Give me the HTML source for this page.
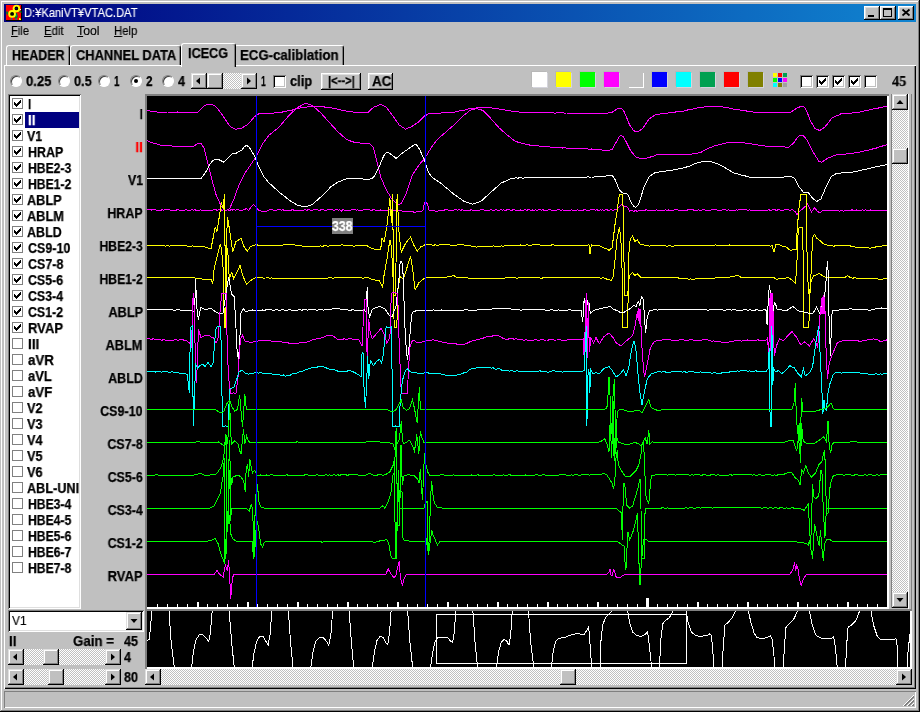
<!DOCTYPE html>
<html><head><meta charset="utf-8"><title>KaniVT</title>
<style>
html,body{margin:0;padding:0;}
body{width:920px;height:712px;overflow:hidden;background:#c0c0c0;position:relative;font-family:"Liberation Sans",sans-serif;font-size:13px;color:#000;}
.a{position:absolute;}
.b{font-weight:bold;}
.t{position:absolute;white-space:nowrap;line-height:16px;height:16px;will-change:transform;}
.raised{background:#c0c0c0;box-shadow:inset -1px -1px 0 #000,inset 1px 1px 0 #fff,inset -2px -2px 0 #808080,inset 2px 2px 0 #dfdfdf;}
.raised2{background:#c0c0c0;box-shadow:inset -1px -1px 0 #000,inset 1px 1px 0 #dfdfdf,inset -2px -2px 0 #808080,inset 2px 2px 0 #fff;}
.sunken{box-shadow:inset 1px 1px 0 #808080,inset -1px -1px 0 #fff,inset 2px 2px 0 #000,inset -2px -2px 0 #dfdfdf;}
.sunk1{box-shadow:inset 1px 1px 0 #808080,inset -1px -1px 0 #fff;}
.dither{background-color:#c0c0c0;background-image:
 linear-gradient(45deg,#fff 25%,transparent 25%,transparent 75%,#fff 75%),
 linear-gradient(45deg,#fff 25%,transparent 25%,transparent 75%,#fff 75%);
 background-size:2px 2px;background-position:0 0,1px 1px;}
.cb{position:absolute;width:11px;height:11px;background:#fff;box-shadow:inset 0 0 0 1px #808080;}
.cb3{position:absolute;width:13px;height:13px;background:#fff;box-shadow:inset 1px 1px 0 #808080,inset -1px -1px 0 #fff,inset 2px 2px 0 #000,inset -2px -2px 0 #c0c0c0;}
.sw{position:absolute;width:15px;height:15px;top:72px;box-shadow:1px 1px 0 #d4d4dc,-1px -1px 0 #b8b8b8;}
svg{position:absolute;overflow:visible;}
</style></head>
<body>
<div class="a " style="left:0px;top:0px;width:920px;height:712px;background:#c0c0c0;box-shadow:inset -1px -1px 0 #000,inset 1px 1px 0 #c0c0c0,inset -2px -2px 0 #808080,inset 2px 2px 0 #fff;"></div>
<div class="a " style="left:4px;top:4px;width:912px;height:18px;background:linear-gradient(90deg,#000080 0%,#1084d0 100%);"></div>
<svg class="a" style="left:6px;top:5px" width="16" height="16" viewBox="0 0 16 16">
<rect width="16" height="16" fill="#000"/>
<rect width="15" height="15" fill="#f00"/>
<path d="M0 6.5h2v3h-1.500z M12.500 7l2-1.500 1.500 2h-3.500z M9.500 8h1.500l1 4-1.500 1.500h-2z" fill="#008020"/>
<path d="M5 13h1v2h-1z M9.500 13.500h1.500v1.500h-1.500z M10 9.500h1v2h-1z" fill="#008080"/>
<circle cx="10.400" cy="3.400" r="2.800" fill="#000" stroke="#ff0" stroke-width="1.900"/>
<circle cx="6.100" cy="8.900" r="2.900" fill="#000" stroke="#ff0" stroke-width="1.900"/>
<rect x="9.500" y="3" width="1" height="1" fill="#0000a0"/>
<path d="M13 13h1l1 1v1h-2z" fill="#ff0"/>
<rect x="14" y="4" width="1" height="1" fill="#fff"/>
</svg>
<div class="t" style="left:24.0px;transform-origin:0 0;top:5px;font-size:12px;-webkit-text-stroke:0.15px;color:#fff;transform:scaleX(0.928);">D:¥KaniVT¥VTAC.DAT</div>
<div class="a raised" style="left:864px;top:6px;width:16px;height:14px;"></div>
<div class="a raised" style="left:880px;top:6px;width:16px;height:14px;"></div>
<div class="a raised" style="left:898px;top:6px;width:16px;height:14px;"></div>
<div class="a " style="left:868px;top:15px;width:6px;height:2px;background:#000"></div>
<div class="a " style="left:883px;top:8px;width:9px;height:9px;border:1px solid #000;border-top:2px solid #000;box-sizing:border-box;"></div>
<svg class="a" style="left:898px;top:6px" width="16" height="14"><path d="M4.5 3.5l7 6M11.500 3.5l-7 6" stroke="#000" stroke-width="1.7" fill="none"/></svg>
<div class="t" style="left:10.8px;transform-origin:0 0;top:23px;font-size:12px;-webkit-text-stroke:0.15px;transform:scaleX(0.931);"><u>F</u>ile</div>
<div class="t" style="left:43.5px;transform-origin:0 0;top:23px;font-size:12px;-webkit-text-stroke:0.15px;transform:scaleX(0.952);"><u>E</u>dit</div>
<div class="t" style="left:77.2px;transform-origin:0 0;top:23px;font-size:12px;-webkit-text-stroke:0.15px;transform:scaleX(1.022);"><u>T</u>ool</div>
<div class="t" style="left:113.5px;transform-origin:0 0;top:23px;font-size:12px;-webkit-text-stroke:0.15px;transform:scaleX(0.944);"><u>H</u>elp</div>
<div class="a " style="left:4px;top:65px;width:912px;height:624px;box-shadow:inset 1px 1px 0 #fff,inset -1px -1px 0 #000,inset -2px -2px 0 #808080;"></div>
<div class="a" style="left:6px;top:45px;width:64px;height:20px;box-sizing:border-box;border-top:1px solid #fff;border-left:1px solid #fff;border-right:1px solid #000;border-radius:3px 3px 0 0;background:#c0c0c0;box-shadow:inset -1px 0 0 #808080;"></div><div class="t" style="left:11.8px;transform-origin:0 0;top:47px;font-size:14px;font-weight:bold;-webkit-text-stroke:0.25px;transform:scaleX(0.888);">HEADER</div>
<div class="a" style="left:70px;top:45px;width:111px;height:20px;box-sizing:border-box;border-top:1px solid #fff;border-left:1px solid #fff;border-right:1px solid #000;border-radius:3px 3px 0 0;background:#c0c0c0;box-shadow:inset -1px 0 0 #808080;"></div><div class="t" style="left:76.0px;transform-origin:0 0;top:47px;font-size:14px;font-weight:bold;-webkit-text-stroke:0.25px;transform:scaleX(0.921);">CHANNEL DATA</div>
<div class="a" style="left:234px;top:45px;width:110px;height:20px;box-sizing:border-box;border-top:1px solid #fff;border-left:1px solid #fff;border-right:1px solid #000;border-radius:3px 3px 0 0;background:#c0c0c0;box-shadow:inset -1px 0 0 #808080;"></div><div class="t" style="left:239.5px;transform-origin:0 0;top:47px;font-size:14px;font-weight:bold;-webkit-text-stroke:0.25px;transform:scaleX(0.945);">ECG-caliblation</div>
<div class="a" style="left:181px;top:43px;width:55px;height:24px;box-sizing:border-box;border-top:1px solid #fff;border-left:1px solid #fff;border-right:1px solid #000;border-radius:3px 3px 0 0;background:#c0c0c0;box-shadow:inset -1px 0 0 #808080;"></div><div class="t" style="left:188.0px;transform-origin:0 0;top:45px;font-size:14px;font-weight:bold;-webkit-text-stroke:0.25px;transform:scaleX(0.902);">ICECG</div>
<div class="a" style="left:10px;top:75px;width:12px;height:12px;border-radius:50%;background:#fff;box-sizing:border-box;border:1px solid;border-color:#808080 #fff #fff #808080;box-shadow:inset 1px 1px 0 #404040;"></div>
<div class="t" style="left:25.5px;transform-origin:0 0;top:73px;font-size:14px;font-weight:bold;-webkit-text-stroke:0.25px;transform:scaleX(0.932);">0.25</div>
<div class="a" style="left:58px;top:75px;width:12px;height:12px;border-radius:50%;background:#fff;box-sizing:border-box;border:1px solid;border-color:#808080 #fff #fff #808080;box-shadow:inset 1px 1px 0 #404040;"></div>
<div class="t" style="left:73.5px;transform-origin:0 0;top:73px;font-size:14px;font-weight:bold;-webkit-text-stroke:0.25px;transform:scaleX(0.909);">0.5</div>
<div class="a" style="left:98px;top:75px;width:12px;height:12px;border-radius:50%;background:#fff;box-sizing:border-box;border:1px solid;border-color:#808080 #fff #fff #808080;box-shadow:inset 1px 1px 0 #404040;"></div>
<div class="t" style="left:114.1px;transform-origin:0 0;top:73px;font-size:14px;font-weight:bold;-webkit-text-stroke:0.25px;transform:scaleX(0.693);">1</div>
<div class="a" style="left:130px;top:75px;width:12px;height:12px;border-radius:50%;background:#fff;box-sizing:border-box;border:1px solid;border-color:#808080 #fff #fff #808080;box-shadow:inset 1px 1px 0 #404040;"></div>
<div class="t" style="left:145.5px;transform-origin:0 0;top:73px;font-size:14px;font-weight:bold;-webkit-text-stroke:0.25px;transform:scaleX(0.834);">2</div>
<div class="a" style="left:162px;top:75px;width:12px;height:12px;border-radius:50%;background:#fff;box-sizing:border-box;border:1px solid;border-color:#808080 #fff #fff #808080;box-shadow:inset 1px 1px 0 #404040;"></div>
<div class="t" style="left:177.8px;transform-origin:0 0;top:73px;font-size:14px;font-weight:bold;-webkit-text-stroke:0.25px;transform:scaleX(0.898);">4</div>
<div class="a " style="left:134px;top:79px;width:4px;height:4px;background:#000;border-radius:50%"></div>
<div class="a dither" style="left:191px;top:73px;width:66px;height:16px;"></div>
<div class="a raised2" style="left:191px;top:73px;width:16px;height:16px;"></div>
<svg class="a" style="left:0;top:0" width="1" height="1"><polygon points="200,77.5 200,84.5 196,81" fill="#000"/></svg>
<div class="a raised2" style="left:207px;top:73px;width:16px;height:16px;"></div>
<div class="a raised2" style="left:241px;top:73px;width:16px;height:16px;"></div>
<svg class="a" style="left:0;top:0" width="1" height="1"><polygon points="247,77.5 247,84.5 251,81" fill="#000"/></svg>
<div class="t" style="left:260.8px;transform-origin:0 0;top:73px;font-size:14px;font-weight:bold;-webkit-text-stroke:0.25px;transform:scaleX(0.603);">1</div>
<div class="a cb3" style="left:273px;top:75px;width:13px;height:13px;"></div>
<div class="t" style="left:290.3px;transform-origin:0 0;top:73px;font-size:14px;font-weight:bold;-webkit-text-stroke:0.25px;transform:scaleX(0.920);">clip</div>
<div class="a raised" style="left:321px;top:73px;width:40px;height:17px;"></div>
<div class="t" style="left:327.8px;transform-origin:0 0;top:73px;font-size:12px;font-weight:bold;-webkit-text-stroke:0.25px;transform:scaleX(0.940);">|&lt;--&gt;|</div>
<div class="a raised" style="left:368px;top:73px;width:25px;height:17px;"></div>
<div class="t" style="left:371.5px;transform-origin:0 0;top:73px;font-size:14px;font-weight:bold;-webkit-text-stroke:0.25px;transform:scaleX(0.964);">AC</div>
<div class="sw" style="left:532px;background:#fff"></div>
<div class="sw" style="left:556px;background:#ff0"></div>
<div class="sw" style="left:580px;background:#0f0"></div>
<div class="sw" style="left:604px;background:#f0f"></div>
<div class="sw" style="left:628px;background:#c0c0c0;box-shadow:1px 1px 0 #fff"></div>
<div class="sw" style="left:652px;background:#00f"></div>
<div class="sw" style="left:676px;background:#0ff"></div>
<div class="sw" style="left:700px;background:#00a050"></div>
<div class="sw" style="left:724px;background:#f00"></div>
<div class="sw" style="left:748px;background:#808000"></div>
<div class="a " style="left:773px;top:73px;width:4px;height:4px;background:#ff0"></div>
<div class="a " style="left:778px;top:73px;width:4px;height:4px;background:#f00"></div>
<div class="a " style="left:783px;top:73px;width:4px;height:4px;background:#00a050"></div>
<div class="a " style="left:773px;top:78px;width:4px;height:4px;background:#0f0"></div>
<div class="a " style="left:778px;top:78px;width:4px;height:4px;background:#00f"></div>
<div class="a " style="left:783px;top:78px;width:4px;height:4px;background:#f0f"></div>
<div class="a " style="left:773px;top:83px;width:4px;height:4px;background:#0ff"></div>
<div class="a " style="left:778px;top:83px;width:4px;height:4px;background:#808000"></div>
<div class="a " style="left:783px;top:83px;width:4px;height:4px;background:#a0a0a0"></div>
<div class="a cb3" style="left:800px;top:75px;width:13px;height:13px;"></div>
<div class="a cb3" style="left:816px;top:75px;width:13px;height:13px;"></div>
<svg class="a" style="left:817px;top:76px" width="11" height="11" shape-rendering="crispEdges" fill="#000"><rect x="2" y="4" width="1" height="3"/><rect x="3" y="5" width="1" height="3"/><rect x="4" y="6" width="1" height="3"/><rect x="5" y="5" width="1" height="3"/><rect x="6" y="4" width="1" height="3"/><rect x="7" y="3" width="1" height="3"/><rect x="8" y="2" width="1" height="3"/></svg>
<div class="a cb3" style="left:832px;top:75px;width:13px;height:13px;"></div>
<svg class="a" style="left:833px;top:76px" width="11" height="11" shape-rendering="crispEdges" fill="#000"><rect x="2" y="4" width="1" height="3"/><rect x="3" y="5" width="1" height="3"/><rect x="4" y="6" width="1" height="3"/><rect x="5" y="5" width="1" height="3"/><rect x="6" y="4" width="1" height="3"/><rect x="7" y="3" width="1" height="3"/><rect x="8" y="2" width="1" height="3"/></svg>
<div class="a cb3" style="left:848px;top:75px;width:13px;height:13px;"></div>
<svg class="a" style="left:849px;top:76px" width="11" height="11" shape-rendering="crispEdges" fill="#000"><rect x="2" y="4" width="1" height="3"/><rect x="3" y="5" width="1" height="3"/><rect x="4" y="6" width="1" height="3"/><rect x="5" y="5" width="1" height="3"/><rect x="6" y="4" width="1" height="3"/><rect x="7" y="3" width="1" height="3"/><rect x="8" y="2" width="1" height="3"/></svg>
<div class="a cb3" style="left:864px;top:75px;width:13px;height:13px;"></div>
<div class="t" style="left:891.5px;transform-origin:0 0;top:73px;font-size:15px;font-weight:bold;-webkit-text-stroke:0.25px;font-family:'Liberation Serif',serif;transform:scaleX(0.953);">45</div>
<div class="a sunken" style="left:8px;top:94px;width:73px;height:515px;background:#fff"></div>
<div class="a cb" style="left:12px;top:98px;width:11px;height:11px;"></div>
<svg class="a" style="left:12px;top:98px" width="11" height="11" shape-rendering="crispEdges" fill="#000"><rect x="2" y="4" width="1" height="3"/><rect x="3" y="5" width="1" height="3"/><rect x="4" y="6" width="1" height="3"/><rect x="5" y="5" width="1" height="3"/><rect x="6" y="4" width="1" height="3"/><rect x="7" y="3" width="1" height="3"/><rect x="8" y="2" width="1" height="3"/></svg>
<div class="t" style="left:27.5px;transform-origin:0 0;top:96px;font-size:14px;font-weight:bold;-webkit-text-stroke:0.25px;transform:scaleX(0.822);">I</div>
<div class="a " style="left:25px;top:112px;width:54px;height:16px;background:#000080"></div>
<div class="a cb" style="left:12px;top:114px;width:11px;height:11px;"></div>
<svg class="a" style="left:12px;top:114px" width="11" height="11" shape-rendering="crispEdges" fill="#000"><rect x="2" y="4" width="1" height="3"/><rect x="3" y="5" width="1" height="3"/><rect x="4" y="6" width="1" height="3"/><rect x="5" y="5" width="1" height="3"/><rect x="6" y="4" width="1" height="3"/><rect x="7" y="3" width="1" height="3"/><rect x="8" y="2" width="1" height="3"/></svg>
<div class="t" style="left:27.5px;transform-origin:0 0;top:112px;font-size:14px;font-weight:bold;-webkit-text-stroke:0.25px;color:#fff;transform:scaleX(0.951);">II</div>
<div class="a cb" style="left:12px;top:130px;width:11px;height:11px;"></div>
<svg class="a" style="left:12px;top:130px" width="11" height="11" shape-rendering="crispEdges" fill="#000"><rect x="2" y="4" width="1" height="3"/><rect x="3" y="5" width="1" height="3"/><rect x="4" y="6" width="1" height="3"/><rect x="5" y="5" width="1" height="3"/><rect x="6" y="4" width="1" height="3"/><rect x="7" y="3" width="1" height="3"/><rect x="8" y="2" width="1" height="3"/></svg>
<div class="t" style="left:26.9px;transform-origin:0 0;top:128px;font-size:14px;font-weight:bold;-webkit-text-stroke:0.25px;transform:scaleX(0.888);">V1</div>
<div class="a cb" style="left:12px;top:146px;width:11px;height:11px;"></div>
<svg class="a" style="left:12px;top:146px" width="11" height="11" shape-rendering="crispEdges" fill="#000"><rect x="2" y="4" width="1" height="3"/><rect x="3" y="5" width="1" height="3"/><rect x="4" y="6" width="1" height="3"/><rect x="5" y="5" width="1" height="3"/><rect x="6" y="4" width="1" height="3"/><rect x="7" y="3" width="1" height="3"/><rect x="8" y="2" width="1" height="3"/></svg>
<div class="t" style="left:27.5px;transform-origin:0 0;top:144px;font-size:14px;font-weight:bold;-webkit-text-stroke:0.25px;transform:scaleX(0.890);">HRAP</div>
<div class="a cb" style="left:12px;top:162px;width:11px;height:11px;"></div>
<svg class="a" style="left:12px;top:162px" width="11" height="11" shape-rendering="crispEdges" fill="#000"><rect x="2" y="4" width="1" height="3"/><rect x="3" y="5" width="1" height="3"/><rect x="4" y="6" width="1" height="3"/><rect x="5" y="5" width="1" height="3"/><rect x="6" y="4" width="1" height="3"/><rect x="7" y="3" width="1" height="3"/><rect x="8" y="2" width="1" height="3"/></svg>
<div class="t" style="left:27.5px;transform-origin:0 0;top:160px;font-size:14px;font-weight:bold;-webkit-text-stroke:0.25px;transform:scaleX(0.870);">HBE2-3</div>
<div class="a cb" style="left:12px;top:178px;width:11px;height:11px;"></div>
<svg class="a" style="left:12px;top:178px" width="11" height="11" shape-rendering="crispEdges" fill="#000"><rect x="2" y="4" width="1" height="3"/><rect x="3" y="5" width="1" height="3"/><rect x="4" y="6" width="1" height="3"/><rect x="5" y="5" width="1" height="3"/><rect x="6" y="4" width="1" height="3"/><rect x="7" y="3" width="1" height="3"/><rect x="8" y="2" width="1" height="3"/></svg>
<div class="t" style="left:27.5px;transform-origin:0 0;top:176px;font-size:14px;font-weight:bold;-webkit-text-stroke:0.25px;transform:scaleX(0.870);">HBE1-2</div>
<div class="a cb" style="left:12px;top:194px;width:11px;height:11px;"></div>
<svg class="a" style="left:12px;top:194px" width="11" height="11" shape-rendering="crispEdges" fill="#000"><rect x="2" y="4" width="1" height="3"/><rect x="3" y="5" width="1" height="3"/><rect x="4" y="6" width="1" height="3"/><rect x="5" y="5" width="1" height="3"/><rect x="6" y="4" width="1" height="3"/><rect x="7" y="3" width="1" height="3"/><rect x="8" y="2" width="1" height="3"/></svg>
<div class="t" style="left:26.9px;transform-origin:0 0;top:192px;font-size:14px;font-weight:bold;-webkit-text-stroke:0.25px;transform:scaleX(0.910);">ABLP</div>
<div class="a cb" style="left:12px;top:210px;width:11px;height:11px;"></div>
<svg class="a" style="left:12px;top:210px" width="11" height="11" shape-rendering="crispEdges" fill="#000"><rect x="2" y="4" width="1" height="3"/><rect x="3" y="5" width="1" height="3"/><rect x="4" y="6" width="1" height="3"/><rect x="5" y="5" width="1" height="3"/><rect x="6" y="4" width="1" height="3"/><rect x="7" y="3" width="1" height="3"/><rect x="8" y="2" width="1" height="3"/></svg>
<div class="t" style="left:26.9px;transform-origin:0 0;top:208px;font-size:14px;font-weight:bold;-webkit-text-stroke:0.25px;transform:scaleX(0.913);">ABLM</div>
<div class="a cb" style="left:12px;top:226px;width:11px;height:11px;"></div>
<svg class="a" style="left:12px;top:226px" width="11" height="11" shape-rendering="crispEdges" fill="#000"><rect x="2" y="4" width="1" height="3"/><rect x="3" y="5" width="1" height="3"/><rect x="4" y="6" width="1" height="3"/><rect x="5" y="5" width="1" height="3"/><rect x="6" y="4" width="1" height="3"/><rect x="7" y="3" width="1" height="3"/><rect x="8" y="2" width="1" height="3"/></svg>
<div class="t" style="left:26.9px;transform-origin:0 0;top:224px;font-size:14px;font-weight:bold;-webkit-text-stroke:0.25px;transform:scaleX(0.892);">ABLD</div>
<div class="a cb" style="left:12px;top:242px;width:11px;height:11px;"></div>
<svg class="a" style="left:12px;top:242px" width="11" height="11" shape-rendering="crispEdges" fill="#000"><rect x="2" y="4" width="1" height="3"/><rect x="3" y="5" width="1" height="3"/><rect x="4" y="6" width="1" height="3"/><rect x="5" y="5" width="1" height="3"/><rect x="6" y="4" width="1" height="3"/><rect x="7" y="3" width="1" height="3"/><rect x="8" y="2" width="1" height="3"/></svg>
<div class="t" style="left:27.5px;transform-origin:0 0;top:240px;font-size:14px;font-weight:bold;-webkit-text-stroke:0.25px;transform:scaleX(0.891);">CS9-10</div>
<div class="a cb" style="left:12px;top:258px;width:11px;height:11px;"></div>
<svg class="a" style="left:12px;top:258px" width="11" height="11" shape-rendering="crispEdges" fill="#000"><rect x="2" y="4" width="1" height="3"/><rect x="3" y="5" width="1" height="3"/><rect x="4" y="6" width="1" height="3"/><rect x="5" y="5" width="1" height="3"/><rect x="6" y="4" width="1" height="3"/><rect x="7" y="3" width="1" height="3"/><rect x="8" y="2" width="1" height="3"/></svg>
<div class="t" style="left:27.5px;transform-origin:0 0;top:256px;font-size:14px;font-weight:bold;-webkit-text-stroke:0.25px;transform:scaleX(0.889);">CS7-8</div>
<div class="a cb" style="left:12px;top:274px;width:11px;height:11px;"></div>
<svg class="a" style="left:12px;top:274px" width="11" height="11" shape-rendering="crispEdges" fill="#000"><rect x="2" y="4" width="1" height="3"/><rect x="3" y="5" width="1" height="3"/><rect x="4" y="6" width="1" height="3"/><rect x="5" y="5" width="1" height="3"/><rect x="6" y="4" width="1" height="3"/><rect x="7" y="3" width="1" height="3"/><rect x="8" y="2" width="1" height="3"/></svg>
<div class="t" style="left:27.5px;transform-origin:0 0;top:272px;font-size:14px;font-weight:bold;-webkit-text-stroke:0.25px;transform:scaleX(0.882);">CS5-6</div>
<div class="a cb" style="left:12px;top:290px;width:11px;height:11px;"></div>
<svg class="a" style="left:12px;top:290px" width="11" height="11" shape-rendering="crispEdges" fill="#000"><rect x="2" y="4" width="1" height="3"/><rect x="3" y="5" width="1" height="3"/><rect x="4" y="6" width="1" height="3"/><rect x="5" y="5" width="1" height="3"/><rect x="6" y="4" width="1" height="3"/><rect x="7" y="3" width="1" height="3"/><rect x="8" y="2" width="1" height="3"/></svg>
<div class="t" style="left:27.5px;transform-origin:0 0;top:288px;font-size:14px;font-weight:bold;-webkit-text-stroke:0.25px;transform:scaleX(0.882);">CS3-4</div>
<div class="a cb" style="left:12px;top:306px;width:11px;height:11px;"></div>
<svg class="a" style="left:12px;top:306px" width="11" height="11" shape-rendering="crispEdges" fill="#000"><rect x="2" y="4" width="1" height="3"/><rect x="3" y="5" width="1" height="3"/><rect x="4" y="6" width="1" height="3"/><rect x="5" y="5" width="1" height="3"/><rect x="6" y="4" width="1" height="3"/><rect x="7" y="3" width="1" height="3"/><rect x="8" y="2" width="1" height="3"/></svg>
<div class="t" style="left:27.5px;transform-origin:0 0;top:304px;font-size:14px;font-weight:bold;-webkit-text-stroke:0.25px;transform:scaleX(0.882);">CS1-2</div>
<div class="a cb" style="left:12px;top:322px;width:11px;height:11px;"></div>
<svg class="a" style="left:12px;top:322px" width="11" height="11" shape-rendering="crispEdges" fill="#000"><rect x="2" y="4" width="1" height="3"/><rect x="3" y="5" width="1" height="3"/><rect x="4" y="6" width="1" height="3"/><rect x="5" y="5" width="1" height="3"/><rect x="6" y="4" width="1" height="3"/><rect x="7" y="3" width="1" height="3"/><rect x="8" y="2" width="1" height="3"/></svg>
<div class="t" style="left:27.5px;transform-origin:0 0;top:320px;font-size:14px;font-weight:bold;-webkit-text-stroke:0.25px;transform:scaleX(0.931);">RVAP</div>
<div class="a cb" style="left:12px;top:338px;width:11px;height:11px;"></div>
<div class="t" style="left:27.5px;transform-origin:0 0;top:336px;font-size:14px;font-weight:bold;-webkit-text-stroke:0.25px;transform:scaleX(0.968);">III</div>
<div class="a cb" style="left:12px;top:354px;width:11px;height:11px;"></div>
<div class="t" style="left:27.5px;transform-origin:0 0;top:352px;font-size:14px;font-weight:bold;-webkit-text-stroke:0.25px;transform:scaleX(0.955);">aVR</div>
<div class="a cb" style="left:12px;top:370px;width:11px;height:11px;"></div>
<div class="t" style="left:27.5px;transform-origin:0 0;top:368px;font-size:14px;font-weight:bold;-webkit-text-stroke:0.25px;transform:scaleX(0.930);">aVL</div>
<div class="a cb" style="left:12px;top:386px;width:11px;height:11px;"></div>
<div class="t" style="left:27.5px;transform-origin:0 0;top:384px;font-size:14px;font-weight:bold;-webkit-text-stroke:0.25px;transform:scaleX(0.950);">aVF</div>
<div class="a cb" style="left:12px;top:402px;width:11px;height:11px;"></div>
<div class="t" style="left:26.9px;transform-origin:0 0;top:400px;font-size:14px;font-weight:bold;-webkit-text-stroke:0.25px;transform:scaleX(0.911);">V2</div>
<div class="a cb" style="left:12px;top:418px;width:11px;height:11px;"></div>
<div class="t" style="left:26.9px;transform-origin:0 0;top:416px;font-size:14px;font-weight:bold;-webkit-text-stroke:0.25px;transform:scaleX(0.911);">V3</div>
<div class="a cb" style="left:12px;top:434px;width:11px;height:11px;"></div>
<div class="t" style="left:26.9px;transform-origin:0 0;top:432px;font-size:14px;font-weight:bold;-webkit-text-stroke:0.25px;transform:scaleX(0.911);">V4</div>
<div class="a cb" style="left:12px;top:450px;width:11px;height:11px;"></div>
<div class="t" style="left:26.9px;transform-origin:0 0;top:448px;font-size:14px;font-weight:bold;-webkit-text-stroke:0.25px;transform:scaleX(0.911);">V5</div>
<div class="a cb" style="left:12px;top:466px;width:11px;height:11px;"></div>
<div class="t" style="left:26.9px;transform-origin:0 0;top:464px;font-size:14px;font-weight:bold;-webkit-text-stroke:0.25px;transform:scaleX(0.911);">V6</div>
<div class="a cb" style="left:12px;top:482px;width:11px;height:11px;"></div>
<div class="t" style="left:26.9px;transform-origin:0 0;top:480px;font-size:14px;font-weight:bold;-webkit-text-stroke:0.25px;transform:scaleX(0.905);">ABL-UNI</div>
<div class="a cb" style="left:12px;top:498px;width:11px;height:11px;"></div>
<div class="t" style="left:27.5px;transform-origin:0 0;top:496px;font-size:14px;font-weight:bold;-webkit-text-stroke:0.25px;transform:scaleX(0.870);">HBE3-4</div>
<div class="a cb" style="left:12px;top:514px;width:11px;height:11px;"></div>
<div class="t" style="left:27.5px;transform-origin:0 0;top:512px;font-size:14px;font-weight:bold;-webkit-text-stroke:0.25px;transform:scaleX(0.870);">HBE4-5</div>
<div class="a cb" style="left:12px;top:530px;width:11px;height:11px;"></div>
<div class="t" style="left:27.5px;transform-origin:0 0;top:528px;font-size:14px;font-weight:bold;-webkit-text-stroke:0.25px;transform:scaleX(0.870);">HBE5-6</div>
<div class="a cb" style="left:12px;top:546px;width:11px;height:11px;"></div>
<div class="t" style="left:27.5px;transform-origin:0 0;top:544px;font-size:14px;font-weight:bold;-webkit-text-stroke:0.25px;transform:scaleX(0.870);">HBE6-7</div>
<div class="a cb" style="left:12px;top:562px;width:11px;height:11px;"></div>
<div class="t" style="left:27.5px;transform-origin:0 0;top:560px;font-size:14px;font-weight:bold;-webkit-text-stroke:0.25px;transform:scaleX(0.870);">HBE7-8</div>
<div class="t" style="right:777.3px;transform-origin:100% 0;top:106px;font-size:14px;font-weight:bold;-webkit-text-stroke:0.25px;transform:scaleX(0.822);">I</div>
<div class="t" style="right:777.3px;transform-origin:100% 0;top:139px;font-size:14px;font-weight:bold;-webkit-text-stroke:0.25px;color:#f00;transform:scaleX(0.951);">II</div>
<div class="t" style="right:777.3px;transform-origin:100% 0;top:172px;font-size:14px;font-weight:bold;-webkit-text-stroke:0.25px;transform:scaleX(0.888);">V1</div>
<div class="t" style="right:777.3px;transform-origin:100% 0;top:205px;font-size:14px;font-weight:bold;-webkit-text-stroke:0.25px;transform:scaleX(0.890);">HRAP</div>
<div class="t" style="right:777.3px;transform-origin:100% 0;top:238px;font-size:14px;font-weight:bold;-webkit-text-stroke:0.25px;transform:scaleX(0.870);">HBE2-3</div>
<div class="t" style="right:777.3px;transform-origin:100% 0;top:271px;font-size:14px;font-weight:bold;-webkit-text-stroke:0.25px;transform:scaleX(0.870);">HBE1-2</div>
<div class="t" style="right:777.3px;transform-origin:100% 0;top:304px;font-size:14px;font-weight:bold;-webkit-text-stroke:0.25px;transform:scaleX(0.910);">ABLP</div>
<div class="t" style="right:777.3px;transform-origin:100% 0;top:337px;font-size:14px;font-weight:bold;-webkit-text-stroke:0.25px;transform:scaleX(0.913);">ABLM</div>
<div class="t" style="right:777.3px;transform-origin:100% 0;top:370px;font-size:14px;font-weight:bold;-webkit-text-stroke:0.25px;transform:scaleX(0.892);">ABLD</div>
<div class="t" style="right:777.3px;transform-origin:100% 0;top:403px;font-size:14px;font-weight:bold;-webkit-text-stroke:0.25px;transform:scaleX(0.891);">CS9-10</div>
<div class="t" style="right:777.3px;transform-origin:100% 0;top:436px;font-size:14px;font-weight:bold;-webkit-text-stroke:0.25px;transform:scaleX(0.889);">CS7-8</div>
<div class="t" style="right:777.3px;transform-origin:100% 0;top:469px;font-size:14px;font-weight:bold;-webkit-text-stroke:0.25px;transform:scaleX(0.882);">CS5-6</div>
<div class="t" style="right:777.3px;transform-origin:100% 0;top:502px;font-size:14px;font-weight:bold;-webkit-text-stroke:0.25px;transform:scaleX(0.882);">CS3-4</div>
<div class="t" style="right:777.3px;transform-origin:100% 0;top:535px;font-size:14px;font-weight:bold;-webkit-text-stroke:0.25px;transform:scaleX(0.882);">CS1-2</div>
<div class="t" style="right:777.3px;transform-origin:100% 0;top:568px;font-size:14px;font-weight:bold;-webkit-text-stroke:0.25px;transform:scaleX(0.931);">RVAP</div>
<div class="a " style="left:145px;top:94px;width:744px;height:515px;box-shadow:inset 2px 2px 0 #808080,inset -2px -2px 0 #fff;"></div>
<div class="a " style="left:147px;top:96px;width:740px;height:511px;background:#000"></div>
<svg class="a" style="left:0;top:0" width="920" height="712" viewBox="0 0 920 712"><g shape-rendering="crispEdges">
<polyline points="147.0,110.5 149.1,110.7 151.2,111.4 153.2,111.7 155.3,111.7 157.4,112.2 159.4,112.2 161.4,112.2 163.4,112.3 165.5,112.3 167.5,112.0 169.5,112.0 171.5,112.4 173.5,112.2 175.5,112.3 177.6,112.0 179.6,112.2 181.6,112.3 183.6,112.1 185.6,112.4 187.6,112.4 189.6,112.0 191.7,112.0 193.7,112.2 195.7,112.4 197.7,112.2 201.0,109.0 204.9,105.4 207.4,104.6 210.0,103.9 212.6,104.8 215.2,106.0 219.0,110.5 223.5,116.7 227.0,122.0 230.7,127.0 233.3,128.2 235.9,129.5 237.9,128.8 240.0,128.4 242.0,128.0 248.3,124.0 254.5,116.7 258.6,114.0 260.7,113.9 262.7,113.8 264.8,113.6 266.8,113.5 268.9,113.6 271.0,113.3 273.0,113.2 275.1,112.9 277.1,112.6 279.2,112.6 281.3,112.3 283.4,111.8 285.4,111.4 287.5,110.8 289.6,110.5 291.7,110.2 293.7,109.7 295.8,108.8 297.8,108.4 299.9,108.0 302.0,107.8 304.0,107.5 306.1,107.3 308.1,106.7 310.2,106.4 312.3,106.6 314.3,106.5 316.4,106.3 318.4,106.4 320.5,106.4 322.9,106.8 325.2,107.1 327.6,107.2 330.0,107.4 332.1,108.0 334.1,108.2 336.2,108.8 338.3,109.6 340.3,109.9 342.4,110.5 344.5,110.6 346.5,111.1 348.6,111.5 350.7,111.7 352.7,111.9 354.8,112.2 357.0,112.2 359.3,112.2 361.5,112.3 363.7,112.2 366.0,112.1 368.2,112.2 371.0,109.5 374.4,106.8 376.5,106.1 378.5,105.2 380.6,104.7 383.2,105.5 385.8,106.8 392.0,114.7 399.2,125.0 405.4,129.1 407.8,128.2 410.2,127.3 412.6,126.0 418.8,121.9 425.0,115.7 427.1,114.7 429.1,113.6 431.2,113.4 433.2,113.2 435.3,113.3 437.4,113.4 439.4,113.2 441.5,113.0 443.6,112.9 445.6,112.9 447.7,112.5 449.8,112.5 451.8,112.6 453.9,112.2 456.0,111.8 458.0,111.3 460.1,110.7 462.2,110.4 464.2,110.2 466.3,109.5 468.4,108.9 470.4,108.9 472.5,108.6 474.6,108.3 476.6,107.9 478.7,107.4 480.8,107.6 482.8,107.5 484.9,107.6 487.0,107.6 489.0,107.5 491.1,107.8 493.2,108.3 495.2,108.5 497.3,108.6 499.3,109.1 501.4,109.4 503.4,109.7 505.5,110.1 507.6,110.4 509.6,110.8 511.7,111.1 513.8,111.5 515.9,111.7 517.9,111.8 520.0,112.4 522.0,112.3 524.0,112.3 526.0,112.5 528.1,112.7 530.1,112.7 532.1,112.7 534.1,112.8 536.1,112.5 538.1,112.9 540.2,112.8 542.2,112.6 544.2,112.6 546.2,112.6 548.2,113.0 550.2,112.8 552.3,112.7 554.3,113.0 556.3,113.0 558.4,112.9 560.4,112.8 562.5,112.9 564.6,113.1 566.6,113.0 568.7,113.0 570.8,113.3 572.8,113.2 574.9,113.1 577.0,113.2 579.0,113.0 581.1,113.3 583.1,113.3 585.2,113.2 587.3,113.2 589.3,113.6 591.4,113.4 593.5,113.3 595.5,113.5 597.6,113.7 599.7,113.3 601.7,113.3 603.8,113.6 605.9,113.1 608.0,113.0 610.0,112.4 612.1,112.2 615.5,110.0 618.3,108.0 621.4,108.0 623.5,110.5 625.5,114.7 629.6,125.0 633.8,130.8 635.8,131.4 637.9,131.8 643.0,128.1 649.2,118.8 655.4,114.7 657.5,114.5 659.5,114.2 661.6,113.7 663.7,113.8 665.7,113.4 667.8,113.0 669.9,112.7 671.9,112.3 674.0,112.3 676.1,111.9 678.2,111.7 680.2,111.3 682.3,111.2 684.4,110.9 686.5,110.2 688.5,109.8 690.5,109.7 692.6,109.2 694.7,108.4 696.7,108.0 698.8,107.8 700.9,107.2 702.9,107.2 705.0,106.6 707.2,106.7 709.5,106.5 711.7,106.4 714.0,106.2 716.2,106.6 718.5,106.2 720.7,106.4 722.8,107.0 724.8,107.5 726.9,107.7 728.9,107.9 731.0,108.7 733.0,108.9 735.1,109.5 737.1,109.7 739.2,109.9 741.3,110.2 743.4,110.5 745.4,110.7 747.5,111.3 749.6,111.5 751.6,111.7 753.7,112.2 755.8,112.0 757.8,112.3 759.9,112.1 762.0,112.2 764.0,112.1 766.1,112.4 768.2,112.4 770.2,112.0 772.3,112.1 774.4,112.1 776.4,112.4 778.5,112.3 780.6,112.1 782.6,112.1 784.7,112.3 786.8,112.4 788.8,112.4 790.9,112.2 794.0,110.0 797.1,108.0 799.7,106.9 802.2,106.0 804.5,107.5 806.4,110.5 810.5,120.8 814.6,128.1 817.2,129.5 819.8,130.6 824.9,127.0 832.2,117.8 834.2,116.9 836.3,115.9 838.4,115.2 840.4,114.0 842.5,113.7 844.5,113.8 846.6,113.3 848.7,113.1 850.8,113.3 852.9,112.8 854.9,112.9 857.0,112.6 859.1,112.2 861.1,111.8 863.2,111.1 865.2,110.7 867.3,110.2 869.4,110.0 871.4,109.4 873.5,108.9 875.8,108.7 878.0,108.2 880.2,107.4 882.5,107.1 884.8,106.5 887.0,106.2" fill="none" stroke="#ff00ff" stroke-width="1"/>
<polyline points="147.0,140.5 149.1,141.6 151.2,142.5 153.3,143.2 155.4,143.5 157.4,144.0 159.4,144.9 161.5,145.2 163.6,145.5 165.6,145.6 167.7,145.6 169.8,145.9 171.9,146.0 173.9,146.2 176.0,146.3 178.2,146.1 180.4,146.3 182.6,146.2 184.8,146.4 186.9,146.5 189.1,146.5 191.3,146.3 193.5,146.3 197.7,143.6 200.8,143.2 203.9,147.7 207.0,160.1 211.1,176.6 216.2,195.2 221.4,206.6 225.5,210.7 227.6,209.6 229.7,208.6 233.8,199.3 239.0,184.9 244.1,174.5 250.3,165.3 256.5,156.0 262.7,143.6 268.9,135.3 279.2,127.0 289.6,114.7 297.8,107.4 299.9,106.3 302.0,105.1 304.0,104.1 306.1,103.3 308.2,104.0 310.2,104.6 312.3,105.4 320.5,112.6 328.8,121.9 338.3,132.2 346.5,139.4 348.6,140.1 350.6,141.1 352.7,141.7 354.8,142.5 356.9,142.8 358.9,142.9 360.9,143.1 363.0,143.6 365.1,143.4 367.1,143.2 369.2,143.2 373.4,147.7 376.5,160.1 380.6,176.6 385.8,189.0 392.0,199.3 398.2,204.5 401.3,203.5 406.4,193.1 412.6,174.5 418.8,165.3 425.0,158.0 431.2,147.7 437.4,139.4 445.7,132.2 453.9,125.0 462.2,116.7 470.4,110.1 472.5,109.6 474.5,109.3 476.6,108.5 478.7,109.3 480.7,109.7 482.8,110.5 491.1,118.8 499.3,128.1 507.6,135.3 515.0,141.1 517.1,141.9 519.1,142.4 521.2,143.0 523.3,143.6 525.3,144.1 527.4,144.6 529.5,145.0 531.5,145.0 533.6,145.5 535.7,145.8 537.7,145.6 539.8,146.1 541.9,146.3 543.9,146.4 546.0,146.7 548.1,146.9 550.1,147.0 552.2,147.3 554.2,147.3 556.3,147.6 558.4,147.5 560.4,147.9 562.5,148.0 564.5,147.9 566.6,148.1 568.7,148.2 570.7,148.5 572.8,148.5 574.9,148.4 576.9,148.4 579.0,148.5 581.1,148.8 583.1,148.6 585.2,149.0 587.3,148.8 589.3,149.2 591.4,149.0 593.5,149.4 595.5,149.3 597.6,149.3 599.7,149.6 601.7,149.9 603.8,150.3 605.8,150.5 607.9,150.8 610.0,150.0 612.1,149.3 617.2,140.5 619.5,136.5 621.4,135.3 623.3,136.8 625.5,140.5 630.7,150.8 635.8,157.0 638.4,157.9 641.0,159.0 643.0,158.7 645.1,158.5 647.2,158.0 649.2,157.6 651.3,156.6 653.4,156.2 655.4,155.4 657.5,154.5 659.6,154.8 661.6,154.5 663.7,154.8 665.8,154.5 667.9,154.9 669.9,154.7 672.0,154.9 674.1,154.7 676.1,155.0 678.2,154.5 680.2,154.6 682.3,154.7 684.3,154.4 686.4,154.3 688.4,154.6 690.5,154.3 692.9,153.9 695.2,153.7 697.6,153.0 700.0,152.9 702.1,151.7 704.1,150.5 706.2,149.6 708.2,148.2 710.3,147.3 712.4,146.9 714.4,145.9 716.5,145.7 718.6,144.7 720.7,144.2 722.7,143.9 724.8,143.2 726.9,142.9 728.9,142.9 731.0,143.0 733.0,142.8 735.1,142.5 737.2,142.9 739.2,142.4 741.3,142.5 743.4,142.6 745.4,143.0 747.5,143.5 749.6,143.9 751.6,143.9 753.7,144.3 755.8,144.4 757.9,145.0 759.9,145.4 762.0,145.6 764.1,145.9 766.1,146.1 768.2,146.1 770.2,146.3 772.3,146.4 774.4,146.4 776.4,146.4 778.5,146.7 780.6,146.7 782.6,146.7 784.7,147.0 786.7,147.4 788.8,147.3 794.0,142.5 797.0,138.0 799.1,135.7 801.2,135.5 803.3,135.7 805.5,138.0 808.4,142.5 813.6,152.9 818.8,161.1 821.9,162.2 828.0,158.0 830.1,157.3 832.1,156.4 834.2,155.7 836.3,154.9 838.4,154.5 840.4,154.7 842.5,154.2 844.6,154.2 846.6,153.9 848.7,153.5 850.8,153.5 852.9,153.1 854.9,152.9 857.0,152.9 859.1,152.1 861.1,151.7 863.2,151.1 865.2,150.9 867.3,150.3 869.4,150.0 871.4,149.4 873.5,148.7 875.8,148.3 878.0,147.3 880.2,146.7 882.5,146.0 884.8,145.5 887.0,144.8" fill="none" stroke="#ff00ff" stroke-width="1"/>
<polyline points="147.0,178.3 149.1,178.2 151.1,178.4 153.2,178.3 155.3,178.4 157.3,178.4 159.4,178.2 161.5,178.2 163.6,178.6 165.6,178.3 167.7,178.3 169.8,178.7 171.8,178.5 173.9,178.7 176.0,178.5 178.0,178.6 180.1,178.4 182.2,178.6 184.2,178.8 186.3,178.6 188.4,178.7 190.5,178.7 192.5,178.4 194.6,178.8 196.7,178.7 198.7,178.6 200.8,178.7 204.9,173.5 210.0,164.2 212.5,161.0 215.2,159.0 218.3,159.5 220.9,160.6 223.5,162.2 227.6,158.4 232.8,153.5 234.9,153.4 236.9,152.9 242.0,149.8 244.2,147.0 246.2,145.6 248.3,146.3 250.3,148.7 254.5,156.0 258.6,166.3 263.8,176.6 268.9,182.8 279.2,192.1 289.6,200.4 297.8,205.5 300.2,205.9 302.7,206.3 305.1,206.6 307.5,206.1 309.9,205.3 312.3,204.5 320.5,197.3 328.8,189.0 330.0,187.4 338.3,181.8 340.4,181.2 342.4,180.2 344.4,179.6 346.5,178.7 348.6,178.6 350.6,178.8 352.7,178.7 354.8,178.3 356.9,178.2 358.9,178.2 361.0,178.3 363.4,179.0 365.8,179.2 368.2,179.7 370.8,178.7 373.4,177.6 378.5,168.3 383.7,156.0 386.0,153.0 387.8,152.4 389.9,153.6 392.0,154.9 396.1,158.4 401.3,153.9 406.4,150.2 412.6,146.0 415.7,144.2 417.6,146.0 419.8,149.8 424.0,159.0 428.1,171.4 431.2,176.6 441.5,183.8 453.9,194.2 464.2,201.4 466.3,202.1 468.4,202.7 470.4,203.4 472.5,204.1 474.6,203.5 476.6,202.8 478.7,202.3 480.8,201.4 491.1,192.1 501.4,182.8 503.5,182.0 505.5,181.2 507.6,180.3 509.6,179.4 511.7,178.3 513.8,178.3 515.9,177.9 517.9,178.1 520.0,177.8 522.2,178.0 524.3,178.0 526.5,177.8 528.7,177.9 530.9,177.7 533.0,178.0 535.2,177.8 537.4,177.7 539.6,177.6 541.7,178.0 543.9,177.8 546.0,178.0 548.0,177.5 550.1,177.9 552.2,177.6 554.2,177.5 556.3,177.5 558.4,177.7 560.4,177.7 562.5,177.3 564.6,177.5 566.6,177.2 568.7,177.5 570.8,177.3 572.8,177.6 574.9,177.6 576.9,177.3 579.0,177.5 581.1,177.2 583.1,177.0 585.2,177.2 587.3,176.9 589.3,177.0 591.4,177.0 593.5,177.1 595.5,176.9 597.6,177.0 599.7,176.5 601.8,176.7 603.8,176.2 605.9,176.0 608.5,175.7 611.0,175.0 613.0,176.5 615.2,179.7 619.3,190.0 622.4,192.7 625.0,193.6 627.6,194.2 631.7,203.5 634.0,206.5 635.4,207.2 637.0,206.2 638.9,203.5 644.1,186.9 649.2,176.6 655.4,172.5 657.5,172.2 659.5,171.9 661.6,171.7 663.7,171.4 665.7,171.1 667.8,170.8 669.9,170.5 671.9,170.1 674.0,169.9 676.1,169.4 678.2,169.0 680.2,168.7 682.3,168.1 684.4,167.9 686.5,167.0 688.5,166.6 690.5,165.6 692.6,164.8 694.7,163.7 696.7,163.2 699.4,162.5 702.0,161.8 704.1,161.6 706.2,161.1 708.3,161.1 711.1,161.9 714.0,162.5 716.2,163.5 718.5,164.1 720.7,165.3 722.8,166.5 724.8,167.6 726.9,168.9 728.9,169.9 731.0,171.3 733.0,172.4 735.1,173.5 737.2,173.8 739.2,174.3 741.3,175.2 743.4,175.8 745.5,176.0 747.5,176.6 749.6,177.2 751.7,177.2 753.7,177.1 755.8,177.1 757.9,177.1 759.9,177.1 762.0,177.2 764.0,177.1 766.1,177.1 768.2,177.3 770.2,177.0 772.3,177.2 774.4,177.3 776.4,177.1 778.5,177.1 780.5,177.4 782.6,177.2 784.7,176.8 786.8,176.5 788.8,176.4 790.9,176.2 795.0,178.7 799.1,186.9 803.3,192.1 805.8,192.5 808.4,192.7 812.6,198.3 816.7,201.4 818.8,200.2 820.8,199.3 826.0,186.9 831.1,176.6 833.7,175.0 836.3,173.5 838.4,173.2 840.4,173.2 842.5,172.8 844.6,172.8 846.6,172.3 848.7,172.2 850.8,172.1 852.9,172.0 854.9,171.6 857.0,171.4 859.1,170.8 861.1,170.2 863.2,169.9 865.2,169.2 867.3,169.0 869.4,168.5 871.4,167.7 873.5,167.3 875.8,166.7 878.0,166.6 880.2,166.0 882.5,165.7 884.8,165.0 887.0,164.6" fill="none" stroke="#ffffff" stroke-width="1"/>
<polyline points="147.0,210.1 148.5,209.7 150.0,209.5 151.5,210.0 153.0,209.6 154.5,209.5 156.0,210.0 157.5,210.7 159.0,210.5 160.5,210.5 162.0,209.7 163.5,210.2 165.0,209.8 166.5,209.6 168.0,209.5 169.5,209.7 171.0,210.7 172.5,210.6 174.0,210.5 175.5,210.5 177.0,209.7 178.5,209.8 180.0,210.3 181.5,210.4 183.0,210.6 184.5,210.6 186.0,209.5 187.5,210.2 189.0,210.3 190.5,210.1 192.0,209.6 193.5,210.1 195.0,209.5 196.5,210.7 198.0,210.6 199.5,210.2 201.0,209.8 202.5,210.7 204.0,210.2 205.5,210.6 207.0,210.6 208.5,210.1 210.0,210.0 211.5,210.2 213.0,210.0 214.5,209.6 216.0,209.8 217.5,210.5 219.0,209.5 220.5,209.5 222.0,210.3 223.5,209.8 225.0,210.1 226.5,210.1 228.0,209.9 229.5,210.8 231.0,209.7 232.5,210.0 234.0,209.7 235.5,210.3 237.0,209.8 238.5,209.9 240.0,210.1 242.0,210.3 244.0,209.8 246.2,208.6 248.5,210.5 251.0,207.0 253.4,204.5 256.0,207.0 259.0,210.5 260.9,210.8 262.7,211.7 264.5,211.3 266.2,211.3 268.0,210.3 269.5,209.7 271.0,209.7 272.5,209.9 274.0,210.7 275.5,210.5 277.0,209.9 278.5,210.0 280.0,209.8 281.5,210.2 283.0,209.6 284.5,210.6 286.0,210.8 287.5,210.9 289.0,210.6 290.5,210.9 292.0,209.6 293.5,210.0 295.0,210.9 296.5,210.6 298.0,210.1 299.5,210.9 301.0,210.4 302.5,210.7 304.0,210.0 305.5,209.8 307.0,210.2 308.5,209.7 310.0,210.1 311.5,210.9 313.0,210.0 314.5,209.5 316.0,209.6 317.5,209.8 319.0,210.6 320.5,210.0 322.0,209.9 323.5,209.7 325.0,210.9 326.5,210.1 328.0,209.8 329.5,209.6 331.0,209.6 332.5,209.7 334.0,210.4 335.5,209.7 337.0,209.6 338.5,210.2 340.0,209.8 341.5,210.9 343.0,209.7 344.5,210.2 346.0,210.6 347.5,210.1 349.0,210.9 350.5,210.1 352.0,209.8 353.5,210.0 355.0,209.5 356.5,210.1 358.0,209.8 359.5,210.7 361.0,210.6 362.5,210.2 364.0,209.5 365.5,209.8 367.0,209.8 368.5,209.7 370.0,209.8 371.5,210.7 373.0,209.6 374.5,209.5 376.0,210.7 377.5,210.2 379.0,210.8 380.5,210.0 382.0,210.7 383.5,210.3 385.0,210.5 386.5,210.5 388.0,210.1 389.5,209.5 391.0,209.7 392.5,210.6 394.0,210.7 395.5,210.7 397.0,209.9 398.5,210.3 400.0,210.1 401.6,210.9 403.2,211.1 404.8,211.7 406.4,211.7 407.9,211.7 409.5,211.9 411.1,212.0 412.6,211.4 414.1,212.3 415.7,212.3 417.2,211.1 418.8,211.7 420.9,211.8 423.0,210.5 424.3,203.0 425.4,201.4 427.5,204.0 429.0,210.0 430.6,211.0 432.1,210.9 433.7,210.3 435.3,211.3 437.2,211.5 439.1,210.0 441.0,210.1 442.5,210.8 444.0,210.3 445.5,209.5 447.0,209.6 448.5,210.3 450.0,210.2 451.5,210.4 453.0,210.7 454.5,209.7 456.0,209.4 457.5,210.7 459.0,209.4 460.5,210.6 462.0,209.6 463.5,210.5 465.0,210.5 466.5,210.6 468.0,210.2 469.5,210.6 471.0,209.7 472.5,210.3 474.0,209.9 475.5,210.6 477.0,210.5 478.5,210.1 480.0,210.1 481.5,209.4 483.0,209.4 484.5,210.2 486.0,210.1 487.5,210.6 489.0,210.3 490.5,209.6 492.0,209.9 493.5,210.5 495.0,210.1 496.5,209.4 498.0,210.6 499.5,210.6 501.0,209.5 502.5,210.2 504.0,209.9 505.5,210.5 507.0,209.8 508.5,209.7 510.0,210.1 511.5,210.8 513.0,209.5 514.5,209.6 516.0,210.3 517.5,210.6 519.0,210.1 520.5,210.0 522.0,210.6 523.5,210.5 525.0,209.5 526.5,210.6 528.0,209.7 529.5,209.8 531.0,210.6 532.5,210.0 534.0,210.5 535.5,209.6 537.0,210.6 538.5,209.6 540.0,209.6 541.5,210.1 543.0,209.9 544.5,210.2 546.0,210.7 547.5,210.4 549.0,209.4 550.5,209.8 552.0,210.2 553.5,210.1 555.0,210.4 556.5,210.1 558.0,209.5 559.5,209.7 561.0,210.6 562.5,209.9 564.0,210.5 565.5,210.8 567.0,210.3 568.5,210.3 570.0,210.3 571.5,209.8 573.0,210.7 574.5,210.1 576.0,210.7 577.5,209.8 579.0,210.6 580.5,210.5 582.0,210.3 583.5,210.0 585.0,209.6 586.5,210.5 588.0,209.9 589.5,210.3 591.0,209.6 592.5,209.5 594.0,209.6 595.5,210.5 597.0,209.6 598.5,210.7 600.0,209.9 601.5,210.2 603.0,209.9 604.5,210.3 606.0,209.5 607.5,210.0 609.0,210.7 610.5,209.7 612.0,210.1 613.7,210.1 615.3,209.5 617.0,209.5 620.0,206.0 621.4,204.5 624.0,206.5 625.8,206.6 627.6,207.2 629.6,211.0 631.8,210.5 634.0,211.3 635.5,210.3 637.0,211.3 638.5,210.9 640.0,210.1 641.5,210.5 643.0,210.5 644.5,210.7 646.0,209.6 647.5,210.2 649.0,210.1 650.5,210.2 652.0,210.7 653.5,210.5 655.0,210.8 656.5,209.6 658.0,210.3 659.5,210.3 661.0,210.4 662.5,210.3 664.0,210.6 665.5,209.8 667.0,210.7 668.5,210.0 670.0,210.2 671.5,210.7 673.0,210.4 674.5,209.8 676.0,209.7 677.5,209.9 679.0,210.3 680.5,210.8 682.0,210.7 683.5,210.0 685.0,210.0 686.5,210.5 688.0,209.8 689.5,210.0 691.0,209.4 692.5,209.7 694.0,210.2 695.5,210.4 697.0,210.3 698.5,209.9 700.0,210.7 701.5,210.3 703.0,209.6 704.5,209.5 706.0,210.8 707.5,210.8 709.0,210.7 710.5,210.2 712.0,209.8 713.5,209.5 715.0,209.8 716.5,209.7 718.0,210.7 719.5,210.6 721.0,210.5 722.5,209.6 724.0,209.7 725.5,209.8 727.0,210.7 728.5,209.6 730.0,210.5 731.5,210.4 733.0,210.2 734.5,210.7 736.0,209.8 737.5,210.1 739.0,209.6 740.5,209.5 742.0,209.4 743.5,209.8 745.0,209.6 746.5,209.5 748.0,210.8 749.5,209.8 751.0,210.6 752.5,210.4 754.0,210.4 755.5,210.3 757.0,210.7 758.5,210.6 760.0,210.4 761.5,210.2 763.0,210.4 764.5,210.4 766.0,210.2 767.5,210.1 769.0,209.6 770.5,210.6 772.0,210.1 773.5,209.5 775.0,209.6 776.5,210.6 778.0,209.8 779.5,209.9 781.0,210.4 782.5,210.6 784.0,209.9 785.5,209.9 787.0,210.0 788.5,209.4 790.0,210.6 791.5,209.4 793.0,210.1 795.0,211.5 797.1,214.8 800.0,211.0 803.0,208.5 806.4,205.5 807.4,203.5 809.0,207.0 811.5,211.7 814.6,207.6 816.7,210.5 818.8,212.2 820.9,212.0 823.0,210.5 824.5,210.0 826.0,210.0 827.6,211.0 829.1,210.9 830.6,210.1 832.1,210.5 833.7,210.4 835.2,210.7 836.7,210.0 838.2,210.9 839.8,211.1 841.3,210.7 842.8,211.0 844.3,211.0 845.9,210.2 847.4,210.8 848.9,210.8 850.4,210.5 852.0,209.8 853.5,210.5 855.0,210.9 856.5,210.0 858.0,210.5 859.6,210.8 861.1,210.4 862.6,209.6 864.1,210.4 865.7,209.9 867.2,210.7 868.7,210.4 870.2,209.9 871.8,210.7 873.3,210.4 874.8,210.0 876.3,210.6 877.9,210.7 879.4,210.7 880.9,210.7 882.4,210.4 884.0,210.4 885.5,210.3 887.0,210.1" fill="none" stroke="#ff00ff" stroke-width="1"/>
<polyline points="147.0,245.3 149.1,245.5 151.1,245.6 153.2,245.7 155.3,245.9 157.3,245.7 159.4,245.9 161.5,245.1 163.5,245.6 165.6,246.1 167.7,245.8 169.7,246.1 171.8,245.4 173.9,245.8 175.9,245.6 178.0,245.9 180.1,246.0 182.1,245.5 184.2,245.7 186.3,245.8 188.3,246.5 190.4,246.4 192.5,245.8 194.5,246.5 196.6,246.2 198.7,246.2 200.8,247.0 202.8,246.8 204.9,247.0 207.0,247.8 209.1,248.4 211.1,248.2 213.2,237.5 215.2,227.2 216.9,231.3 219.3,216.8 221.4,202.4 223.1,208.6 224.5,194.5 225.5,295.3 226.4,240.0 227.6,216.8 229.7,231.3 232.8,252.0 235.9,241.6 241.0,238.5 244.1,246.8 247.2,251.3 250.3,246.8 252.4,245.8 254.4,245.1 256.5,244.7 258.6,245.4 260.6,245.4 262.7,245.0 264.8,245.9 266.8,245.7 268.9,245.8 271.0,245.9 273.0,245.3 275.1,245.9 277.2,245.6 279.2,245.7 281.3,245.5 283.4,244.8 285.5,244.8 287.5,244.5 289.6,244.7 291.7,244.6 293.7,244.7 295.8,245.1 297.8,245.6 299.9,245.3 302.0,246.1 304.0,246.0 306.1,246.2 308.1,246.9 310.2,246.8 312.3,246.7 314.3,246.4 316.4,246.4 318.5,246.5 320.5,245.7 322.6,246.5 324.7,245.4 326.7,246.0 328.8,246.0 330.9,245.1 332.9,245.7 335.0,245.3 337.0,245.2 339.0,245.4 341.0,244.9 343.1,245.0 345.1,245.1 347.1,245.9 349.1,245.2 351.1,245.8 353.1,246.0 355.1,246.1 357.1,245.5 359.1,245.5 361.2,245.7 363.2,246.0 365.2,245.4 367.2,245.8 369.2,247.2 371.3,248.2 373.6,248.9 376.0,249.4 378.3,249.0 380.6,249.9 382.0,238.5 384.1,241.6 386.8,227.2 389.9,198.3 391.5,223.0 392.6,194.5 393.8,295.3 395.5,295.3 397.1,194.5 399.2,235.4 401.3,252.0 405.4,243.7 410.5,237.1 413.6,244.7 417.2,251.3 420.9,246.8 422.9,246.2 425.0,244.7 427.1,244.3 429.1,244.6 431.2,244.9 433.3,245.3 435.3,244.8 437.4,245.4 439.4,245.0 441.5,244.9 443.6,244.9 445.6,244.8 447.7,244.7 449.8,244.9 451.8,245.4 453.9,245.3 456.0,245.5 458.0,244.5 460.1,244.1 462.2,244.3 464.3,245.2 466.3,245.2 468.4,245.5 470.5,245.7 472.5,246.5 474.6,246.8 476.7,247.1 478.7,246.6 480.8,246.5 482.8,246.1 484.9,246.9 487.0,246.0 489.0,246.4 491.1,246.7 493.1,245.9 495.2,246.2 497.3,246.3 499.3,246.4 501.4,246.0 503.5,246.1 505.5,245.3 507.6,245.5 509.7,245.1 511.7,245.7 513.8,245.0 515.9,245.1 517.9,245.5 520.0,244.9 522.0,245.3 524.1,245.4 526.1,244.9 528.2,245.0 530.2,245.3 532.2,245.0 534.3,244.9 536.3,245.0 538.4,244.8 540.4,245.0 542.4,245.7 544.5,245.7 546.5,245.4 548.6,245.3 550.6,245.1 552.6,244.9 554.7,245.1 556.7,245.7 558.7,245.8 560.8,245.3 562.8,245.8 564.9,245.8 566.9,245.7 568.9,245.7 571.0,245.8 573.0,245.5 575.1,245.8 577.1,245.4 579.1,245.7 581.2,246.0 583.2,245.9 585.3,245.6 587.3,245.8 588.9,244.1 590.0,254.0 591.4,244.7 593.5,245.6 595.5,245.7 597.6,246.0 599.6,245.9 601.7,246.8 604.1,248.0 606.6,248.9 609.0,250.3 612.1,247.8 615.2,223.0 617.2,210.7 619.3,194.5 622.8,194.5 623.4,227.2 624.5,289.1 625.0,295.3 627.6,295.3 628.2,289.1 629.0,252.0 630.2,239.6 632.7,235.8 634.8,241.6 637.3,239.6 640.0,244.1 642.4,244.8 644.8,245.2 647.2,245.8 649.3,246.1 651.3,245.9 653.4,246.0 655.5,245.6 657.5,245.9 659.6,245.9 661.7,246.0 663.7,245.5 665.8,246.0 667.8,246.0 669.9,245.8 672.0,246.1 674.0,246.0 676.1,245.6 678.2,245.6 680.2,245.2 682.3,245.8 684.4,245.9 686.4,245.4 688.5,245.6 690.5,245.6 692.6,245.6 694.7,245.1 696.7,245.7 698.8,245.4 700.9,245.5 702.9,245.2 705.0,245.3 707.0,245.4 709.1,245.6 711.1,245.5 713.2,245.6 715.2,244.9 717.2,245.1 719.3,245.3 721.3,245.6 723.4,245.2 725.4,245.6 727.4,245.6 729.5,245.0 731.5,245.5 733.6,245.2 735.6,245.1 737.6,245.2 739.7,245.4 741.7,245.3 743.7,245.3 745.8,245.1 747.8,245.6 749.9,245.5 751.9,245.8 753.9,245.8 756.0,245.4 758.0,246.1 760.1,245.2 762.1,245.6 764.1,245.5 766.2,245.7 768.2,245.4 770.3,246.1 772.3,245.8 773.9,252.0 776.0,244.1 778.1,244.6 780.3,245.0 782.4,246.2 784.6,246.3 786.7,247.4 790.9,250.9 794.0,248.9 796.0,250.0 797.1,231.3 798.7,210.7 800.8,194.5 803.6,194.5 806.4,194.5 807.0,252.0 808.4,293.3 809.9,295.3 811.1,272.6 812.6,237.5 814.6,234.4 816.7,238.5 818.8,239.6 823.9,244.1 826.5,244.8 829.1,245.8 831.3,245.8 833.5,246.1 835.7,245.9 838.0,245.4 840.2,245.8 842.4,245.5 844.6,245.3 846.7,245.4 848.7,245.4 850.8,246.1 852.9,246.3 854.9,247.0 857.0,247.2 859.1,247.1 861.1,247.1 863.2,247.9 865.3,247.2 867.3,247.6 869.4,248.2 871.6,247.9 873.8,247.6 876.0,246.8 878.2,246.9 880.4,246.8 882.6,245.9 884.8,245.6 887.0,245.3" fill="none" stroke="#ffff00" stroke-width="1"/>
<polyline points="147.0,277.8 149.1,277.9 151.1,278.0 153.2,277.8 155.3,277.7 157.3,277.6 159.4,277.9 161.5,277.8 163.6,277.9 165.6,277.7 167.7,277.9 169.8,277.7 171.8,278.0 173.9,277.9 176.0,277.8 178.0,277.8 180.1,277.9 182.2,277.6 184.3,277.8 186.3,278.0 188.4,277.7 190.5,278.0 192.5,277.9 194.6,277.8 196.7,278.3 198.7,278.4 200.8,278.6 202.9,279.3 204.9,279.6 207.0,279.8 209.1,279.8 211.1,279.8 212.7,284.0 214.2,268.5 217.3,256.1 220.4,243.7 221.8,252.0 223.5,272.6 224.3,327.3 225.8,327.3 226.6,252.0 227.6,247.8 229.3,278.8 231.7,272.6 233.8,278.8 236.9,272.6 240.0,265.4 243.1,276.7 246.6,284.0 250.3,280.9 252.9,279.1 255.5,277.8 257.5,277.7 259.6,277.9 261.6,277.8 263.6,278.1 265.7,278.0 267.7,277.8 269.7,278.1 271.7,278.0 273.8,278.3 275.8,278.3 277.8,278.1 279.9,278.2 281.9,278.3 283.9,278.3 286.0,278.5 288.0,278.0 290.0,278.2 292.1,278.3 294.1,278.2 296.1,278.4 298.2,278.2 300.2,278.6 302.2,278.4 304.2,278.3 306.3,278.6 308.3,278.4 310.3,278.4 312.4,278.6 314.4,278.6 316.5,278.3 318.5,278.3 320.6,278.5 322.6,278.4 324.7,278.0 326.8,278.3 328.8,277.8 330.9,277.9 332.9,278.1 335.0,277.8 337.1,277.9 339.1,277.7 341.2,277.7 343.3,277.7 345.4,277.6 347.4,278.0 349.5,277.6 351.6,277.8 353.7,277.9 355.8,277.7 357.8,278.0 359.9,277.7 362.0,278.0 364.1,278.0 366.1,277.9 368.2,277.8 370.8,279.0 373.4,279.8 375.5,280.1 377.5,280.7 379.6,280.9 382.7,287.1 384.1,274.7 386.8,260.2 389.9,239.6 391.5,247.8 393.0,276.7 394.2,327.3 396.8,327.3 397.8,290.0 400.2,276.7 403.3,278.8 407.4,266.4 410.5,256.1 412.6,268.5 415.1,290.2 418.8,282.9 425.0,277.8 427.1,277.9 429.1,277.7 431.2,277.6 433.3,277.6 435.3,277.4 437.4,277.1 439.5,277.4 441.5,277.1 443.6,277.1 445.7,277.2 447.7,276.8 449.8,276.9 453.5,275.1 456.0,277.2 458.1,277.1 460.1,277.3 462.2,277.6 464.3,277.7 466.3,277.7 468.4,278.0 470.5,278.3 472.5,278.1 474.6,278.4 476.7,278.3 478.7,278.5 480.8,278.4 482.9,278.2 484.9,278.3 487.0,278.2 489.0,278.0 491.1,278.1 493.2,278.1 495.2,278.3 497.3,278.0 499.4,278.2 501.4,278.3 503.5,278.2 505.6,277.9 507.6,278.0 509.7,277.8 511.7,277.9 513.8,277.9 515.9,278.0 517.9,278.0 520.0,277.8 522.0,277.7 524.1,277.6 526.1,277.8 528.2,277.6 530.2,277.6 532.3,277.9 534.3,277.6 536.4,277.9 538.4,277.7 540.4,278.0 542.5,278.0 544.5,277.6 546.6,277.6 548.6,278.0 550.7,277.9 552.7,277.8 554.7,277.9 556.8,278.0 558.8,277.8 560.9,277.8 562.9,277.6 565.0,277.7 567.0,277.6 569.1,277.9 571.1,277.9 573.1,277.6 575.2,277.9 577.2,277.6 579.3,277.6 581.3,277.9 583.4,277.8 585.4,278.0 587.4,277.9 589.5,277.9 591.5,277.6 593.6,278.0 595.6,277.6 597.7,277.9 599.7,278.0 601.8,278.0 603.8,277.8 606.2,278.9 608.6,279.6 611.0,280.5 613.1,276.7 615.2,258.2 617.2,237.5 619.3,227.6 620.7,235.4 622.2,272.6 622.6,327.3 625.1,327.4 627.6,327.3 628.4,280.9 630.2,274.7 632.7,272.6 634.8,275.7 637.3,273.6 640.6,277.2 642.7,277.4 644.8,277.1 646.9,277.5 649.0,277.5 651.0,277.3 653.1,277.6 655.2,277.4 657.3,277.4 659.4,277.6 661.5,277.3 663.6,277.7 665.7,277.9 667.7,277.6 669.8,277.9 671.9,277.5 674.0,277.9 676.1,277.8 678.2,277.9 680.2,278.5 682.3,278.5 684.4,278.9 686.4,278.7 688.5,279.2 690.6,278.9 692.6,279.2 694.7,279.0 696.8,278.8 698.8,278.5 700.9,278.4 702.9,278.4 705.0,278.4 707.0,278.1 709.0,278.4 711.0,278.2 713.0,278.2 715.0,278.0 717.0,277.7 719.0,277.5 721.0,277.7 723.0,277.3 725.0,277.4 727.0,277.3 729.0,277.2 731.0,276.9 733.0,277.0 735.1,275.8 737.2,275.1 739.2,276.3 741.3,277.5 743.4,277.3 745.4,277.6 747.5,277.4 749.5,277.5 751.6,277.4 753.7,277.6 755.7,277.6 757.8,277.5 759.9,277.5 761.9,277.7 764.0,277.9 766.0,277.7 768.1,277.6 770.2,277.7 772.2,277.7 774.3,277.8 776.4,279.2 778.5,279.0 780.5,278.9 782.6,278.5 784.7,278.1 786.7,277.9 788.8,277.8 792.9,280.9 795.4,282.9 796.7,268.5 798.1,233.4 799.1,227.6 802.2,227.6 803.1,252.0 803.5,327.3 806.2,327.2 808.9,327.3 809.5,293.3 811.1,280.9 813.6,275.7 815.7,275.0 817.7,274.2 819.8,273.6 823.9,276.7 826.0,277.2 828.0,277.3 830.1,277.6 832.2,277.8 834.3,277.8 836.5,277.7 838.6,277.7 840.7,277.4 842.9,277.5 845.0,277.3 847.7,275.7 850.8,277.8 852.9,278.1 854.9,277.8 857.0,278.1 859.0,278.1 861.1,278.0 863.2,278.1 865.2,278.6 867.3,278.4 869.3,278.7 871.4,278.5 873.5,278.8 875.5,278.7 877.6,279.0 879.6,279.2 881.7,279.2 884.4,278.7 887.0,278.4" fill="none" stroke="#ffff00" stroke-width="1"/>
<polyline points="147.0,309.8 149.0,309.7 151.0,309.5 153.1,310.0 155.1,309.5 157.1,309.9 159.1,309.8 161.2,309.5 163.2,310.0 165.2,309.5 167.2,309.9 169.2,309.6 171.3,309.6 173.3,310.0 175.3,310.3 177.3,309.7 179.4,309.8 181.4,310.2 183.4,310.5 185.4,310.2 187.5,310.1 189.5,310.6 191.5,310.2 194.6,311.9 195.6,278.8 196.6,305.6 198.3,319.5 200.8,307.7 202.9,308.2 204.9,309.5 207.0,309.4 209.0,308.4 211.1,308.2 215.2,311.6 217.2,312.4 219.3,313.9 223.0,313.0 226.5,290.0 228.6,277.0 230.7,289.0 231.7,294.3 234.2,296.8 235.5,317.0 236.9,348.0 238.4,360.3 239.6,343.8 241.0,312.8 243.1,308.7 246.2,312.0 248.2,310.8 250.3,310.2 252.4,310.0 254.4,310.5 256.4,309.9 258.5,310.2 260.6,310.3 262.6,310.0 264.7,310.2 266.7,309.7 268.8,309.7 270.8,309.8 272.9,310.2 274.9,310.0 276.9,309.9 279.0,310.1 281.1,310.0 283.1,309.8 285.1,310.3 287.2,310.2 289.2,309.7 291.3,310.0 293.4,310.0 295.4,310.3 297.4,310.1 299.5,309.7 301.6,310.3 303.6,309.6 305.6,309.8 307.7,310.1 309.8,309.5 311.8,309.8 313.9,309.4 315.9,310.0 317.9,310.0 320.0,309.8 322.0,309.8 324.0,310.1 326.0,309.5 328.0,309.8 330.0,309.6 334.0,308.3 336.1,308.6 338.2,308.8 340.3,309.0 342.4,309.6 344.4,309.9 346.5,309.7 348.6,310.1 350.7,310.2 352.9,309.7 355.2,310.2 357.4,310.1 359.6,310.4 361.9,310.2 364.1,309.8 366.2,312.0 367.2,287.1 368.2,311.9 369.7,316.5 372.3,309.3 374.7,308.2 377.2,307.3 379.6,306.5 382.1,307.7 384.7,308.5 388.9,314.9 392.0,317.0 396.1,305.6 399.2,276.7 400.2,261.3 401.9,261.3 403.3,276.7 403.9,298.4 405.4,337.6 407.4,360.3 408.9,348.0 411.6,314.9 413.0,311.8 415.9,310.9 418.8,310.8 420.9,310.6 422.9,310.2 425.0,310.4 427.1,310.0 429.1,310.0 431.2,310.6 433.3,310.0 435.3,310.1 437.4,310.3 439.5,310.7 441.5,310.0 443.6,310.3 445.7,310.4 447.7,310.7 449.8,310.6 451.9,310.6 453.9,310.1 456.0,310.2 458.1,310.1 460.1,310.6 462.2,310.7 464.3,309.9 466.3,309.9 468.4,310.0 470.5,310.0 472.5,310.2 474.6,310.2 476.7,310.1 478.7,309.7 480.8,309.3 482.8,309.5 484.9,309.3 487.0,309.4 489.0,309.6 491.1,309.2 493.1,308.9 495.2,308.7 497.3,308.7 499.3,308.7 501.4,308.1 503.5,308.8 505.5,308.6 507.6,308.3 509.7,308.9 511.7,309.1 513.8,309.1 515.9,309.3 517.9,309.4 520.0,310.0 522.0,310.1 524.1,309.6 526.1,309.7 528.1,309.8 530.2,309.8 532.2,309.9 534.3,309.7 536.3,309.7 538.3,309.8 540.4,309.8 542.4,310.0 544.4,309.7 546.5,310.5 548.5,310.3 550.5,309.9 552.6,310.0 554.6,310.1 556.7,310.1 558.7,309.9 560.7,310.6 562.8,310.7 564.8,310.3 566.8,310.3 568.9,309.9 570.9,310.0 573.0,310.2 575.0,310.1 577.0,310.7 579.1,310.1 581.1,310.4 582.7,322.1 584.2,297.9 585.7,308.0 586.9,300.0 588.0,305.0 588.9,302.0 590.4,313.9 593.5,310.8 595.6,309.7 597.6,309.8 599.7,308.7 601.8,308.5 603.8,307.8 605.9,307.9 608.0,307.1 610.0,306.2 614.1,309.8 616.2,310.1 618.2,311.3 620.3,312.5 622.4,312.8 624.5,312.1 626.5,310.8 628.6,309.4 630.7,308.5 633.8,305.0 635.8,307.0 638.3,301.5 640.0,305.5 641.5,296.5 643.5,299.8 644.5,319.0 645.7,332.5 647.2,317.0 649.2,311.0 651.3,310.2 653.4,310.0 655.4,309.7 657.5,310.1 659.5,309.8 661.6,310.0 663.7,309.4 665.7,309.3 667.8,309.4 669.9,309.7 671.9,309.9 674.0,309.8 676.1,309.7 678.1,309.7 680.2,309.7 682.3,309.2 684.3,309.5 686.4,309.4 688.5,309.1 690.5,309.1 692.6,309.3 694.7,309.3 696.7,309.7 698.8,310.0 700.9,309.5 702.9,310.0 705.0,309.6 707.0,310.1 709.1,310.0 711.1,309.5 713.1,309.4 715.2,309.4 717.2,309.4 719.3,309.5 721.3,309.8 723.3,310.1 725.4,310.1 727.4,309.8 729.4,309.9 731.5,310.1 733.5,309.5 735.5,310.0 737.6,310.2 739.6,310.1 741.7,310.1 743.7,309.9 745.7,309.6 747.8,310.2 749.8,309.8 751.8,310.3 753.9,310.4 755.9,309.9 758.0,309.9 760.0,310.5 762.0,310.3 764.1,309.8 766.1,310.1 767.1,325.2 768.6,293.8 769.6,285.4 770.8,300.0 772.5,318.0 774.3,302.5 775.4,303.6 777.4,309.8 779.7,309.7 782.0,309.9 784.4,310.8 786.7,310.6 792.7,306.4 798.1,310.6 800.4,311.4 802.8,311.4 805.1,312.5 807.4,312.8 810.0,313.8 812.6,313.9 816.7,307.0 819.8,313.9 822.0,305.0 824.9,293.8 826.4,276.7 827.4,261.3 828.5,276.7 829.1,322.0 830.5,356.2 831.3,327.0 832.2,310.8 834.3,310.7 836.3,310.2 838.4,310.1 840.5,309.5 842.5,309.2 844.6,309.8 846.7,309.3 848.7,309.0 850.8,308.7 852.9,309.3 854.9,309.0 857.0,309.6 859.1,309.7 861.1,309.3 863.2,309.5 865.3,309.8 867.3,309.9 869.4,310.3 871.5,310.0 873.5,309.3 875.5,309.0 877.6,308.4 879.7,308.7 881.7,307.9 884.4,308.3 887.0,309.0" fill="none" stroke="#ffffff" stroke-width="1"/>
<polyline points="147.0,338.7 149.1,338.5 151.2,339.6 153.2,338.7 155.3,339.6 157.4,339.0 159.5,339.3 161.5,340.4 163.6,339.6 165.7,340.1 167.8,340.3 169.8,340.1 171.9,340.0 173.9,340.1 176.0,339.7 178.0,340.5 180.1,339.6 182.1,339.8 184.2,340.1 186.8,340.9 189.4,342.8 191.5,348.0 192.9,298.4 193.7,293.2 194.6,327.3 195.6,364.5 196.6,383.1 197.7,348.0 198.7,329.4 200.8,337.6 202.9,336.3 204.9,335.6 206.9,335.3 209.0,335.2 211.1,336.9 213.2,337.6 216.2,342.8 218.3,337.6 220.4,306.7 221.8,293.2 224.0,293.1 226.2,293.2 226.8,327.3 227.6,358.3 229.3,385.1 230.7,393.4 233.3,392.9 235.9,393.4 237.9,378.9 239.6,348.0 241.0,337.6 242.5,335.2 245.2,341.8 247.8,341.7 250.3,342.2 252.4,342.5 254.4,341.1 256.5,341.4 258.6,340.9 260.7,340.9 262.7,340.2 264.8,340.1 266.9,340.5 268.9,340.5 271.0,340.9 273.1,341.4 275.1,341.2 277.2,341.3 279.3,341.2 281.3,341.5 283.4,342.9 285.5,342.7 287.5,342.7 289.6,343.4 291.7,343.8 293.7,343.3 295.8,343.4 297.8,343.5 299.9,342.7 301.9,342.7 304.0,342.8 306.1,342.6 308.1,341.0 310.2,341.1 312.3,339.6 314.3,339.6 316.4,338.7 318.5,338.4 320.5,338.2 322.6,337.6 324.7,336.6 326.7,335.8 328.8,335.6 330.9,335.3 333.0,335.9 338.3,339.7 340.4,339.6 342.4,339.4 344.5,338.7 346.6,339.5 348.6,338.9 350.7,338.7 352.8,339.3 354.8,339.1 356.8,339.4 358.9,340.1 362.0,345.9 363.5,317.0 364.7,299.4 366.1,299.4 366.8,337.6 367.2,364.5 368.6,319.0 370.3,333.5 372.3,338.7 376.5,333.5 381.2,328.3 384.1,334.5 386.8,342.8 389.9,337.6 390.9,306.7 391.3,293.2 393.4,292.6 395.6,293.0 397.7,293.2 398.6,327.3 400.2,368.6 401.3,393.4 403.3,393.1 405.4,393.3 407.4,393.4 408.5,368.6 410.1,345.9 412.6,340.1 414.7,340.9 416.7,342.3 418.8,342.8 420.9,342.8 422.9,341.4 425.0,341.3 427.1,340.8 429.1,340.1 431.2,340.3 433.3,339.7 435.4,340.9 437.4,340.6 439.5,341.9 441.5,341.9 443.6,342.8 445.7,342.4 447.7,343.6 449.8,343.3 451.9,343.3 453.9,343.9 456.0,343.9 458.1,344.3 460.1,344.6 462.2,344.9 464.3,344.1 466.3,343.6 468.4,342.5 470.5,341.6 472.5,340.9 474.6,340.7 476.7,339.5 478.7,339.4 480.8,338.5 482.9,338.3 484.9,337.3 487.0,336.6 489.1,336.6 491.1,336.8 493.2,335.5 495.2,335.2 497.3,335.6 499.4,336.1 501.4,337.3 503.4,338.5 505.5,339.3 507.7,339.3 509.8,338.5 512.0,338.3 514.0,339.3 516.0,338.5 518.0,339.9 520.0,339.9 522.0,339.6 524.1,340.4 526.1,339.4 528.1,340.5 530.2,340.2 532.2,340.5 534.3,340.0 536.3,339.6 538.3,340.5 540.4,339.9 542.4,339.5 544.4,340.1 546.5,340.0 548.5,340.0 550.5,339.6 552.6,339.6 554.6,340.1 556.7,340.0 558.7,339.6 560.7,340.0 562.8,340.3 564.8,340.3 566.8,340.0 568.9,339.9 570.9,339.9 573.0,339.7 575.0,339.7 577.0,340.0 579.1,339.6 581.1,340.1 583.2,339.0 584.2,358.3 585.2,327.0 586.3,293.2 587.3,358.3 588.3,302.5 589.3,352.1 591.0,337.6 593.5,342.8 596.0,337.6 599.3,343.8 603.8,336.6 609.0,333.1 613.1,337.6 616.2,342.8 618.8,344.6 621.4,345.9 626.5,340.7 632.7,335.6 634.8,327.3 636.9,314.9 638.9,308.7 640.6,317.0 642.0,348.0 643.5,368.6 644.5,376.9 647.2,364.5 650.3,348.0 654.4,341.3 657.0,340.9 659.6,340.1 661.7,340.2 663.7,339.5 665.8,339.9 667.9,340.0 669.9,339.5 672.0,340.6 674.0,340.3 676.1,340.0 678.2,340.2 680.2,339.6 682.3,339.6 684.4,340.0 686.4,340.2 688.5,340.1 690.6,339.3 692.6,340.0 694.7,340.4 696.7,340.1 698.8,340.4 700.9,340.4 702.9,339.5 705.0,339.8 707.2,339.9 709.4,340.5 711.6,341.3 713.8,340.8 716.0,341.8 718.2,342.0 720.4,341.9 722.6,342.4 724.8,342.5 726.9,342.7 728.9,342.2 731.0,341.4 733.1,341.7 735.1,340.6 737.2,340.7 739.3,340.5 741.3,341.1 743.4,340.9 745.4,340.2 747.5,340.0 749.6,340.4 751.6,340.6 753.7,340.3 755.7,340.5 757.8,339.9 759.9,340.2 762.0,340.4 764.0,340.2 766.1,340.1 767.8,337.6 768.6,364.5 769.8,300.0 770.6,293.2 772.7,293.2 773.3,327.0 774.3,356.2 776.4,345.9 779.5,338.7 781.5,339.5 783.6,340.7 787.8,335.6 791.9,331.4 796.0,336.6 800.8,344.9 804.3,341.8 809.5,345.9 813.6,338.7 816.0,342.8 817.7,348.0 819.8,317.0 821.9,298.4 823.5,296.3 824.9,306.7 826.0,348.0 827.4,378.9 829.1,364.5 831.1,357.3 834.2,350.0 837.3,342.8 839.7,341.8 842.2,341.0 844.6,340.1 846.7,340.3 848.7,340.8 850.8,340.3 852.9,340.2 854.9,341.1 857.0,340.7 859.0,341.1 861.1,341.3 863.2,340.4 865.2,340.8 867.3,339.7 869.4,339.3 871.4,339.5 873.5,338.7 875.5,339.4 877.6,339.7 879.7,341.1 881.7,341.3 884.4,340.5 887.0,339.9" fill="none" stroke="#ff00ff" stroke-width="1"/>
<rect x="770" y="293" width="3" height="58" fill="#ff00ff"/>
<polygon points="821,314 822.3,297 824.8,297 825.3,314" fill="#ff00ff"/>
<polygon points="636.5,316 638.5,308.5 640.5,309 641.5,330 639,322" fill="#ff00ff"/>
<rect x="585" y="300" width="2" height="50" fill="#ff00ff"/>
<polyline points="147.0,371.7 149.1,371.7 151.2,371.5 153.2,371.3 155.3,372.1 157.4,371.1 159.5,371.7 161.5,372.2 163.6,371.2 165.7,371.7 167.8,372.0 169.8,372.2 171.9,371.7 173.9,372.3 176.0,372.9 178.1,372.8 180.1,373.3 182.2,373.2 184.8,373.6 187.3,374.8 189.4,393.4 190.4,327.3 192.1,326.3 193.4,426.4 195.6,364.5 197.7,368.6 199.7,365.5 202.8,364.1 204.9,366.5 208.0,362.4 211.1,366.5 213.2,362.4 214.8,339.7 216.2,327.3 218.3,326.5 220.4,326.3 221.4,348.0 222.4,426.4 225.2,425.9 228.0,426.4 229.7,389.3 231.8,388.3 233.8,387.2 236.9,378.9 239.0,371.7 242.0,370.3 246.2,373.8 248.3,374.1 250.3,373.5 252.4,373.5 254.4,372.8 256.5,372.7 258.6,373.2 260.6,372.6 262.7,373.1 264.8,373.8 266.8,374.0 268.9,373.9 270.9,373.7 273.0,374.4 275.1,374.3 277.1,374.5 279.2,374.7 281.3,375.6 283.4,375.0 285.4,376.1 287.5,375.8 289.6,375.6 291.6,374.0 293.7,373.8 295.7,373.3 297.8,372.7 299.9,371.4 301.9,371.1 304.0,370.9 306.1,369.2 308.1,369.1 310.2,368.2 312.3,367.4 314.3,367.6 316.4,367.7 318.4,366.5 320.5,366.5 322.9,366.6 325.2,367.4 327.6,368.6 330.0,369.2 332.1,369.0 334.1,369.5 336.2,370.4 338.3,371.4 340.3,371.2 342.4,371.7 344.5,371.3 346.5,371.4 348.6,370.5 350.7,370.7 352.8,371.8 354.8,372.4 356.8,373.9 358.9,374.8 361.0,376.9 362.0,354.2 363.0,352.1 364.1,389.3 365.5,407.9 366.8,378.9 367.6,356.2 368.8,378.9 370.3,360.3 373.4,365.5 376.5,361.4 379.6,359.3 381.6,363.4 383.3,354.2 384.7,339.7 386.2,326.9 388.9,327.4 391.5,326.9 392.0,368.6 393.0,426.4 395.1,425.9 397.1,426.5 399.2,426.4 400.2,401.7 402.3,381.0 405.4,370.3 407.4,369.0 410.5,371.7 412.6,372.4 414.6,372.3 416.7,373.0 418.8,373.8 420.9,374.0 422.9,373.7 425.0,372.7 427.1,372.4 429.1,373.3 431.2,373.8 433.3,373.1 435.3,373.8 437.4,373.8 439.5,373.5 441.5,374.2 443.6,374.9 445.7,375.1 447.8,375.6 449.8,375.0 451.9,375.8 454.0,375.2 456.0,375.4 458.1,374.7 460.1,374.1 462.2,373.8 464.3,372.6 466.3,372.3 468.4,370.8 470.4,369.1 472.5,368.6 474.6,368.7 476.6,367.9 478.7,367.7 480.8,367.2 482.8,367.2 484.9,367.0 487.0,367.1 489.0,367.2 491.1,368.2 493.2,367.9 495.2,369.0 497.3,369.0 499.4,368.8 501.4,370.0 503.5,370.4 505.5,370.4 507.6,370.7 509.7,371.1 511.7,370.6 513.8,371.3 515.9,371.0 517.9,370.9 520.0,371.3 522.0,371.9 524.1,371.2 526.1,371.2 528.1,371.8 530.2,371.2 532.2,371.6 534.3,371.0 536.3,371.8 538.3,371.1 540.4,370.9 542.4,372.0 544.4,371.1 546.5,372.0 548.5,372.1 550.5,371.6 552.6,370.9 554.6,371.0 556.7,371.2 558.7,371.4 560.7,371.7 562.8,372.1 564.8,371.4 566.8,371.2 568.9,371.7 570.9,371.2 573.0,371.2 575.0,371.7 577.0,371.9 579.1,371.2 581.1,371.7 584.2,370.3 585.2,348.0 586.3,326.3 586.9,426.4 587.7,377.0 588.9,368.6 589.8,393.4 590.6,369.6 593.1,373.8 596.0,372.7 599.3,373.8 603.8,368.6 606.4,367.5 609.0,366.5 612.1,370.3 616.2,376.9 620.3,373.8 623.4,369.6 626.1,375.8 628.6,368.6 630.7,354.2 633.8,340.7 635.8,348.0 637.9,372.7 640.0,393.4 642.0,404.8 644.1,393.4 647.2,378.9 651.3,373.8 653.4,373.3 655.4,372.7 657.5,371.7 659.6,371.6 661.6,372.2 663.7,371.4 665.8,372.1 667.8,372.2 669.9,372.3 672.0,371.9 674.0,371.4 676.1,371.4 678.2,372.0 680.2,371.6 682.3,372.2 684.3,371.5 686.4,372.4 688.5,371.8 690.5,371.5 692.6,371.8 694.7,372.1 696.7,372.3 698.8,372.1 700.9,371.9 702.9,372.3 705.0,372.3 707.3,373.0 709.6,372.7 711.9,373.4 714.2,372.5 716.5,373.2 718.6,373.6 720.6,373.3 722.7,372.6 724.8,372.4 726.8,372.2 728.9,372.4 731.0,371.2 733.0,371.7 735.1,371.4 737.2,370.9 739.2,371.2 741.3,370.7 743.4,371.0 745.4,370.4 747.5,371.2 749.6,371.0 751.6,371.1 753.7,371.4 755.8,370.7 757.8,371.5 759.9,371.3 762.0,372.0 764.0,371.3 766.1,371.7 768.2,368.6 769.2,348.0 770.2,426.4 771.3,426.4 771.9,326.3 772.7,385.1 773.9,368.6 775.4,371.7 778.5,370.7 781.6,373.8 785.7,370.7 789.8,365.5 791.9,366.9 794.0,367.6 798.1,373.8 801.2,376.9 803.3,368.6 805.3,375.8 809.5,372.7 812.6,366.5 814.6,352.1 816.7,337.6 818.8,326.3 819.8,348.0 821.4,378.9 822.9,414.0 823.9,399.6 824.9,407.9 826.4,409.9 828.0,393.4 830.1,383.1 833.2,374.8 835.3,372.7 837.5,373.0 839.6,372.8 841.8,373.2 844.0,372.1 846.1,372.8 848.3,372.8 850.5,372.9 852.7,372.6 854.8,372.2 857.0,372.7 859.1,372.6 861.1,373.4 863.2,373.2 865.3,373.3 867.3,373.9 869.4,374.4 871.6,374.3 873.8,374.3 876.0,373.6 878.2,374.4 880.4,373.8 882.6,374.3 884.8,373.3 887.0,373.8" fill="none" stroke="#00ffff" stroke-width="1"/>
<polyline points="147.0,409.5 215.2,409.5 219.3,412.3 223.5,412.0 226.6,404.2 229.7,400.1 231.7,406.3 234.8,411.2 237.5,409.3 239.6,394.6 241.0,410.9 242.5,427.4 243.7,410.9 244.8,393.7 245.8,404.7 246.6,409.9 248.3,409.5 386.8,409.5 390.9,411.3 395.1,410.9 398.2,405.8 401.3,400.1 403.3,407.8 406.4,410.4 409.5,408.9 412.6,399.6 414.3,407.8 415.7,415.0 417.2,423.3 418.4,402.7 419.4,387.2 420.2,404.7 420.9,409.5 603.8,409.5 606.9,407.8 608.4,390.0 609.0,377.0 610.0,395.0 610.6,420.0 611.7,433.6 612.7,400.0 613.5,390.0 614.5,378.9 615.2,420.0 615.8,454.3 617.2,413.0 618.3,410.2 622.4,409.3 628.6,411.8 638.9,410.2 642.0,413.0 646.1,404.7 648.8,399.9 651.3,407.8 657.5,410.4 665.8,409.5 791.9,409.5 794.0,402.7 794.6,393.4 795.4,383.0 796.4,419.2 797.7,431.6 799.1,444.0 800.6,459.5 801.2,398.6 801.8,398.5 802.6,411.0 804.3,411.9 813.6,411.9 819.8,409.9 823.9,408.8 827.0,407.8 831.1,403.0 833.2,408.5 835.3,409.5 887.0,409.5" fill="none" stroke="#00ff00" stroke-width="1"/>
<polyline points="147.0,442.5 149.1,442.5 151.1,442.5 153.2,442.7 155.3,442.5 157.3,442.5 159.4,442.5 161.5,442.4 163.6,442.5 165.6,442.6 167.7,442.6 169.8,442.3 171.8,442.4 173.9,442.3 176.0,442.6 178.0,442.6 180.1,442.3 182.2,442.7 184.3,442.7 186.3,442.6 188.4,442.5 190.5,442.4 192.5,442.3 194.6,442.5 197.7,441.5 199.8,442.0 201.8,442.5 204.0,442.4 206.3,442.5 208.5,442.6 210.7,442.6 213.0,442.8 215.2,442.9 218.3,441.9 224.5,446.0 226.0,434.7 227.2,444.0 228.6,431.6 229.7,400.6 230.5,431.6 231.7,444.0 234.8,440.9 237.9,444.0 239.6,450.2 241.0,454.3 242.5,439.8 243.5,429.5 244.8,444.0 246.6,436.1 248.3,440.9 250.3,442.5 252.4,442.5 254.4,442.6 256.5,442.5 258.6,442.6 260.6,442.5 262.7,442.6 264.8,442.5 266.8,442.4 268.9,442.7 271.0,442.7 273.1,442.6 275.1,442.6 277.2,442.4 279.3,442.4 281.3,442.4 283.4,442.3 285.5,442.6 287.5,442.5 289.6,442.6 291.7,442.5 293.7,442.7 295.8,442.5 297.4,441.3 298.9,442.5 300.9,442.6 302.9,442.3 304.9,442.4 306.9,442.7 308.9,442.5 310.9,442.7 312.9,442.5 314.9,442.3 317.0,442.6 319.0,442.6 321.0,442.4 323.0,442.3 325.0,442.4 327.0,442.7 329.0,442.6 331.0,442.3 333.0,442.4 335.0,442.3 337.0,442.3 339.0,442.6 341.0,442.4 343.0,442.5 345.0,442.5 347.0,442.4 349.1,442.6 351.1,442.4 353.1,442.6 355.1,442.3 357.1,442.5 359.1,442.4 361.1,442.4 363.1,442.7 365.1,442.5 368.2,441.3 370.5,441.6 372.9,441.5 375.2,441.9 377.5,441.9 379.6,442.0 381.6,442.2 383.7,442.5 385.8,442.6 387.8,442.6 389.9,442.9 393.0,444.0 395.1,450.2 396.1,429.5 397.1,444.0 399.2,439.8 401.3,421.2 402.3,437.8 403.3,444.0 405.4,443.0 407.4,441.5 409.5,440.4 412.6,446.0 414.3,451.2 415.7,444.0 416.7,433.6 417.8,444.0 418.8,454.3 420.3,431.6 421.9,437.8 424.0,442.5 426.0,442.4 428.0,442.6 430.1,442.4 432.1,442.4 434.1,442.3 436.1,442.3 438.1,442.5 440.1,442.4 442.2,442.5 444.2,442.4 446.2,442.5 448.2,442.7 450.2,442.5 452.3,442.5 454.3,442.6 456.3,442.4 458.3,442.4 460.3,442.7 462.4,442.6 464.4,442.4 466.4,442.4 468.4,442.6 470.4,442.7 472.4,442.4 474.5,442.7 476.5,442.7 478.5,442.5 480.5,442.5 482.5,442.3 484.6,442.3 486.6,442.7 488.6,442.4 490.6,442.6 492.6,442.4 494.7,442.6 496.7,442.5 498.7,442.4 500.7,442.4 502.7,442.6 504.7,442.3 506.8,442.4 508.8,442.5 510.8,442.6 512.8,442.5 514.8,442.4 516.9,442.7 518.9,442.4 520.9,442.3 522.9,442.4 524.9,442.5 526.9,442.3 529.0,442.4 531.0,442.4 533.0,442.5 535.0,442.4 537.0,442.4 539.1,442.7 541.1,442.7 543.1,442.6 545.1,442.6 547.1,442.5 549.2,442.4 551.2,442.3 553.2,442.3 555.2,442.7 557.2,442.6 559.2,442.7 561.3,442.3 563.3,442.6 565.3,442.5 567.3,442.6 569.3,442.4 571.4,442.7 573.4,442.3 575.4,442.5 577.4,442.6 579.4,442.7 581.5,442.6 583.5,442.6 585.5,442.6 587.5,442.7 589.5,442.4 591.5,442.6 593.6,442.7 595.6,442.6 597.6,442.5 599.7,441.7 601.7,440.9 604.8,438.8 606.9,444.0 609.0,452.2 610.2,420.0 611.7,458.4 613.0,400.0 614.1,460.5 615.6,423.0 616.6,436.7 618.3,441.9 620.3,442.8 622.4,443.5 625.0,444.2 627.6,444.6 630.0,443.9 632.4,443.1 634.8,442.3 636.8,443.1 638.9,444.0 641.4,446.0 643.1,441.9 645.1,437.8 647.2,444.0 648.8,429.9 649.9,444.0 652.3,441.9 655.4,442.5 657.4,442.5 659.4,442.5 661.5,442.3 663.5,442.6 665.5,442.7 667.5,442.7 669.5,442.6 671.6,442.5 673.6,442.6 675.6,442.5 677.6,442.5 679.6,442.6 681.6,442.3 683.7,442.6 685.7,442.3 687.7,442.5 689.7,442.5 691.7,442.4 693.8,442.6 695.8,442.5 697.8,442.5 699.8,442.7 701.8,442.4 703.9,442.3 705.9,442.4 707.9,442.6 709.9,442.4 711.9,442.4 714.0,442.7 716.0,442.6 718.0,442.5 720.0,442.7 722.0,442.4 724.0,442.6 726.1,442.4 728.1,442.5 730.1,442.6 732.1,442.7 734.1,442.7 736.2,442.5 738.2,442.5 740.2,442.4 742.2,442.4 744.2,442.5 746.3,442.6 748.3,442.6 750.3,442.6 752.3,442.7 754.3,442.4 756.4,442.4 758.4,442.5 760.4,442.4 762.4,442.4 764.4,442.5 766.4,442.6 768.5,442.5 770.5,442.4 772.5,442.6 774.5,442.7 776.5,442.5 778.6,442.3 780.6,442.3 782.6,442.5 784.7,442.1 786.7,441.2 788.8,440.9 790.8,440.6 792.9,440.2 795.0,446.0 796.7,451.2 798.1,439.8 799.1,423.3 800.2,445.0 800.6,462.5 801.6,423.3 802.6,437.8 804.3,442.3 807.4,443.5 809.5,443.7 811.5,443.8 813.6,444.0 819.8,439.8 823.9,436.7 826.4,441.9 828.0,421.2 829.1,444.0 830.5,453.3 832.2,444.0 834.2,442.5 836.4,442.5 838.6,442.2 840.8,442.1 843.1,442.2 845.3,442.0 847.5,442.2 849.7,442.0 851.8,441.9 853.8,441.9 855.9,441.9 858.0,442.2 860.1,442.1 862.1,442.2 864.2,442.3 866.3,442.3 868.4,442.4 870.4,442.4 872.5,442.2 874.6,442.3 876.6,442.2 878.7,442.2 880.8,442.4 882.9,442.5 884.9,442.3 887.0,442.5" fill="none" stroke="#00ff00" stroke-width="1"/>
<polyline points="147.0,475.4 149.1,475.4 151.1,475.6 153.2,475.6 155.3,475.0 157.3,474.9 159.4,475.3 161.5,475.2 163.5,475.7 165.6,475.6 167.7,475.5 169.8,475.5 171.8,475.6 173.9,475.0 176.0,475.3 178.0,475.1 180.1,475.8 182.2,475.0 184.2,475.7 186.3,475.0 188.4,475.6 190.4,475.2 192.5,475.4 194.6,474.7 196.6,474.5 198.7,473.5 200.8,473.7 202.8,474.3 204.9,475.4 207.0,475.7 209.1,475.2 211.1,474.6 213.2,474.9 215.2,474.4 217.3,472.9 221.4,466.7 223.5,458.4 225.1,444.0 226.0,433.6 226.8,525.4 228.0,525.4 229.3,440.0 230.3,470.0 231.7,485.3 232.8,477.0 234.9,476.4 236.9,474.9 238.9,475.6 241.0,477.0 243.7,481.1 245.2,491.5 246.2,468.7 247.6,464.6 248.7,477.0 249.7,458.8 250.8,464.6 252.4,472.9 254.0,470.8 255.5,471.2 256.5,475.4 258.5,475.3 260.6,475.0 262.6,475.2 264.6,475.5 266.6,475.0 268.7,475.6 270.7,474.9 272.7,475.0 274.8,475.6 276.8,475.2 278.8,475.2 280.9,475.4 282.9,475.3 284.9,475.2 286.9,474.8 289.0,475.5 291.0,475.7 293.0,475.7 295.1,475.4 297.1,475.1 299.1,475.1 301.2,475.4 303.2,475.4 305.2,474.8 307.2,474.9 309.3,475.1 311.3,475.2 313.3,475.5 315.4,475.2 317.4,474.7 319.4,475.5 321.4,475.1 323.5,475.2 325.5,474.9 327.5,475.1 329.6,475.0 331.6,475.4 333.6,474.7 335.7,475.2 337.7,474.8 339.7,475.3 341.7,474.6 343.8,474.9 345.8,474.9 347.8,475.2 349.9,474.6 351.9,475.0 353.9,474.8 356.0,474.8 358.0,475.0 360.0,475.5 362.0,475.0 364.1,475.5 366.1,475.0 369.2,473.3 371.3,474.0 373.4,475.4 375.5,475.7 377.5,475.0 379.6,474.6 381.7,475.0 383.7,475.1 385.8,474.5 389.9,471.8 393.0,465.6 395.1,456.3 396.5,428.5 397.4,525.4 399.5,525.4 401.0,445.0 402.3,485.3 403.9,476.0 406.7,475.0 409.5,474.9 412.1,475.2 414.7,476.0 417.8,479.1 419.2,483.2 420.3,468.7 421.3,485.3 422.5,499.7 424.0,464.6 425.0,453.3 426.0,464.6 428.1,472.9 430.2,476.0 433.3,475.4 435.3,475.7 437.3,475.2 439.3,475.1 441.3,474.9 443.3,474.9 445.3,475.5 447.3,475.8 449.3,475.8 451.3,475.3 453.3,474.9 455.3,475.2 457.3,475.6 459.3,475.7 461.4,475.5 463.4,475.0 465.4,475.3 467.4,475.3 469.4,475.4 471.4,475.0 473.4,475.7 475.4,475.7 477.4,474.9 479.4,475.1 481.4,475.6 483.4,475.0 485.4,475.7 487.4,475.3 489.4,475.4 491.4,475.4 493.4,474.9 495.4,475.0 497.4,475.0 499.4,475.4 501.4,475.4 503.4,474.8 505.4,475.6 507.4,475.1 509.4,474.9 511.4,475.1 513.4,475.6 515.5,475.2 517.5,475.3 519.5,475.6 521.5,475.6 523.5,475.4 525.5,475.0 527.5,475.2 529.5,475.5 531.5,475.4 533.5,475.2 535.5,474.9 537.5,475.0 539.5,475.3 541.5,475.1 543.5,474.6 545.5,475.3 547.5,475.5 549.5,475.3 551.5,475.4 553.5,475.4 555.5,475.1 557.5,475.3 559.5,474.9 561.5,474.6 563.5,474.9 565.5,474.8 567.5,475.4 569.5,475.2 571.6,475.0 573.6,475.1 575.6,474.6 577.6,475.0 579.6,475.2 581.6,474.8 583.6,474.7 585.6,474.8 587.6,474.8 589.6,475.1 591.6,474.6 593.6,474.5 595.6,474.7 597.6,474.9 599.7,474.6 601.7,474.1 603.8,473.3 606.9,475.0 609.6,479.1 612.1,483.2 613.7,489.4 615.2,475.0 616.2,454.3 617.2,452.2 618.3,464.6 621.4,470.8 625.5,476.6 628.1,476.5 630.7,476.0 635.8,470.8 638.9,464.6 641.0,454.3 642.0,444.0 643.5,441.9 644.7,464.6 645.5,493.5 646.8,499.7 648.8,503.9 650.3,485.3 651.3,476.0 653.3,475.9 655.4,474.9 657.4,474.8 659.4,474.4 661.5,474.9 663.5,474.8 665.5,474.6 667.5,475.1 669.5,474.7 671.6,474.6 673.6,474.7 675.6,475.3 677.6,474.4 679.6,474.8 681.6,474.7 683.7,474.6 685.7,474.8 687.7,474.6 689.7,475.3 691.7,474.9 693.8,475.1 695.8,474.6 697.8,474.9 699.8,475.0 701.8,475.2 703.9,474.6 705.9,474.9 707.9,475.3 709.9,475.2 711.9,474.6 714.0,474.9 716.0,475.2 718.0,474.8 720.0,475.1 722.0,475.1 724.0,475.4 726.1,475.0 728.1,475.1 730.1,474.8 732.1,475.1 734.1,474.7 736.2,474.9 738.2,474.8 740.2,474.7 742.2,474.5 744.2,474.6 746.3,474.9 748.3,474.7 750.3,474.4 752.3,475.2 754.3,474.7 756.4,475.3 758.4,475.0 760.4,474.8 762.4,475.3 764.4,475.3 766.4,474.7 768.5,474.5 770.5,475.0 772.5,475.2 774.5,475.0 776.5,475.2 778.6,474.8 780.6,475.0 782.6,474.9 784.7,473.9 786.7,473.2 788.8,472.5 791.9,472.9 795.0,477.4 798.1,480.1 800.2,485.3 801.6,468.7 803.3,472.9 805.7,465.6 808.4,472.9 811.5,477.0 815.7,472.9 818.8,464.6 821.9,461.5 823.5,453.3 824.5,450.2 825.3,464.6 826.4,513.0 828.0,513.0 829.7,489.4 831.1,481.1 833.2,476.0 836.3,474.9 838.3,474.8 840.4,474.8 842.4,474.8 844.4,475.2 846.4,474.6 848.5,474.6 850.5,474.7 852.5,475.4 854.6,475.0 856.6,474.5 858.6,475.3 860.6,475.3 862.7,475.3 864.7,474.8 866.7,475.2 868.7,474.8 870.8,474.6 872.8,475.3 874.8,475.3 876.9,474.7 878.9,475.4 880.9,474.5 882.9,474.8 885.0,474.5 887.0,475.0" fill="none" stroke="#00ff00" stroke-width="1"/>
<polyline points="147.0,508.4 149.0,508.2 151.0,508.5 153.0,508.5 155.0,508.6 157.0,508.2 159.0,508.2 161.0,508.2 163.0,508.2 165.0,508.6 167.0,508.1 169.0,508.4 171.0,508.2 173.0,508.3 175.0,508.4 177.0,508.6 179.0,508.5 181.0,508.1 183.0,508.2 185.0,508.2 187.0,508.7 189.0,508.6 191.0,508.6 193.0,508.6 195.0,508.6 197.0,508.7 199.0,508.6 201.0,508.2 203.0,508.6 205.0,508.4 207.0,508.6 209.0,508.4 211.6,507.2 214.2,505.9 217.3,499.7 220.4,493.5 222.4,479.1 223.5,474.9 224.2,458.4 224.9,558.4 225.8,558.4 229.9,470.0 230.7,521.0 231.3,509.0 232.8,508.4 235.1,508.3 237.4,508.2 239.7,508.2 242.0,508.2 244.6,508.5 247.2,509.0 249.3,511.0 251.4,503.8 252.8,511.0 253.8,558.4 254.8,520.0 256.5,484.2 257.6,485.0 258.6,500.7 260.7,506.9 262.8,507.4 264.8,508.4 266.8,508.6 268.8,508.6 270.8,508.7 272.9,508.5 274.9,508.4 276.9,508.6 278.9,508.1 280.9,508.5 282.9,508.4 284.9,508.2 287.0,508.2 289.0,508.4 291.0,508.2 293.0,508.4 295.0,508.5 297.0,508.3 299.0,508.1 301.1,508.4 303.1,508.2 305.1,508.2 307.1,508.2 309.1,508.3 311.1,508.1 313.1,508.5 315.2,508.7 317.2,508.3 319.2,508.6 321.2,508.7 323.2,508.1 325.2,508.1 327.2,508.6 329.2,508.6 331.3,508.5 333.3,508.2 335.3,508.3 337.3,508.7 339.3,508.7 341.3,508.6 343.3,508.2 345.4,508.6 347.4,508.3 349.4,508.6 351.4,508.1 353.4,508.7 355.4,508.5 357.4,508.6 359.5,508.2 361.5,508.5 363.5,508.5 365.5,508.5 367.5,508.3 369.5,508.6 371.5,508.3 373.6,508.3 375.6,508.2 377.6,508.5 379.6,508.4 382.7,505.9 384.7,508.0 387.8,502.8 390.9,493.0 393.0,474.9 394.0,472.9 394.5,458.4 395.3,558.4 396.3,558.4 398.6,470.0 399.4,508.4 401.4,508.1 403.5,508.2 405.5,508.1 407.6,508.5 409.6,508.4 411.7,508.4 413.8,508.1 415.8,508.4 417.9,508.3 419.9,508.1 421.9,508.1 424.0,508.4 425.4,502.4 427.1,501.8 428.1,555.4 429.2,540.0 430.6,498.7 431.6,481.1 432.9,494.5 434.3,502.8 437.4,507.3 439.5,508.0 441.5,507.8 443.6,508.4 445.6,508.3 447.6,508.2 449.6,508.5 451.6,508.1 453.6,508.4 455.6,508.3 457.6,508.6 459.7,508.1 461.7,508.3 463.7,508.4 465.7,508.7 467.7,508.4 469.7,508.4 471.7,508.5 473.7,508.3 475.7,508.1 477.7,508.4 479.7,508.7 481.7,508.6 483.7,508.2 485.7,508.5 487.8,508.6 489.8,508.2 491.8,508.5 493.8,508.3 495.8,508.2 497.8,508.3 499.8,508.2 501.8,508.3 503.8,508.1 505.8,508.3 507.8,508.1 509.8,508.6 511.8,508.5 513.8,508.1 515.9,508.6 517.9,508.2 519.9,508.4 521.9,508.4 523.9,508.3 525.9,508.3 527.9,508.4 529.9,508.1 531.9,508.7 533.9,508.1 535.9,508.6 537.9,508.2 539.9,508.3 541.9,508.3 543.9,508.1 546.0,508.1 548.0,508.3 550.0,508.4 552.0,508.7 554.0,508.7 556.0,508.1 558.0,508.4 560.0,508.1 562.0,508.6 564.0,508.3 566.0,508.7 568.0,508.4 570.0,508.1 572.0,508.1 574.1,508.2 576.1,508.7 578.1,508.2 580.1,508.4 582.1,508.3 584.1,508.3 586.1,508.6 588.1,508.2 590.1,508.6 592.1,508.5 594.1,508.7 596.1,508.4 598.1,508.7 600.1,508.4 602.2,508.5 604.2,508.5 606.2,508.6 608.2,508.7 610.2,508.1 612.2,508.1 614.2,508.4 616.2,508.4 619.3,511.0 621.4,513.1 622.4,540.0 623.4,484.2 624.5,483.2 625.5,490.4 626.5,504.8 629.6,507.9 632.7,505.9 634.8,498.7 637.9,488.3 640.0,479.0 641.0,509.0 641.6,558.4 644.3,558.4 645.1,509.0 647.2,508.9 649.2,508.4 651.2,508.4 653.3,508.2 655.3,508.7 657.4,508.2 659.4,508.0 661.5,508.0 663.5,507.9 665.5,508.4 667.6,507.9 669.6,508.3 671.7,508.4 673.7,508.5 675.7,508.3 677.8,508.1 679.8,508.2 681.9,508.3 683.9,508.2 686.0,507.9 688.0,508.2 690.0,507.7 692.1,507.8 694.1,508.3 696.2,507.9 698.2,507.7 700.3,508.1 702.3,507.8 704.3,507.5 706.4,507.5 708.4,507.6 710.5,507.7 712.5,508.1 714.5,507.5 716.6,508.0 718.6,507.9 720.7,507.6 722.7,508.0 724.8,507.8 726.8,507.6 728.9,507.6 730.9,507.5 733.0,507.6 735.1,507.9 737.1,507.7 739.2,507.5 741.3,507.6 743.3,507.7 745.4,507.5 747.5,507.8 749.5,507.4 751.6,508.0 753.7,507.6 755.7,507.5 757.8,507.9 759.9,507.7 761.9,508.1 764.0,507.9 766.1,507.9 768.1,508.1 770.2,507.7 772.3,508.1 774.3,508.0 776.4,507.9 778.5,508.3 780.5,507.7 782.6,508.0 784.7,508.3 786.7,507.9 788.8,508.4 790.9,508.0 792.9,507.9 795.0,508.3 797.0,508.6 799.1,508.4 801.7,509.2 804.3,510.4 807.0,505.9 808.4,503.8 809.5,529.6 810.7,545.0 812.6,484.2 813.6,496.6 815.7,498.7 818.8,495.6 820.8,470.8 821.9,470.8 822.9,500.0 823.9,519.3 824.9,537.9 826.4,508.4 829.1,508.4 831.2,508.4 833.2,508.5 835.3,508.2 837.4,508.4 839.4,508.1 841.5,508.4 843.6,508.6 845.6,508.3 847.7,508.2 849.8,508.1 851.8,508.5 853.9,508.3 856.0,508.7 858.0,508.6 860.1,508.1 862.2,508.7 864.3,508.7 866.3,508.6 868.4,508.6 870.5,508.5 872.5,508.6 874.6,508.5 876.7,508.5 878.7,508.2 880.8,508.1 882.9,508.6 884.9,508.5 887.0,508.4" fill="none" stroke="#00ff00" stroke-width="1"/>
<polyline points="147.0,541.4 149.1,541.3 151.1,541.5 153.2,541.4 155.3,541.5 157.3,541.3 159.4,541.3 161.5,541.5 163.6,541.4 165.6,541.3 167.7,541.5 169.8,541.4 171.8,541.5 173.9,541.3 176.0,541.3 178.0,541.5 180.1,541.4 182.2,541.3 184.2,541.5 186.3,541.4 188.4,541.3 190.5,541.4 192.5,541.4 194.6,541.3 196.7,541.4 198.7,541.3 200.8,541.4 202.9,541.7 204.9,542.0 207.0,541.3 209.0,540.8 211.1,540.4 213.1,539.5 215.2,538.3 218.3,544.1 220.4,552.3 223.1,559.6 224.5,563.7 225.5,550.3 226.6,525.5 227.6,517.2 228.6,513.1 229.7,519.3 230.7,533.8 232.8,538.9 235.9,541.0 238.0,541.1 240.0,541.4 242.1,541.4 244.2,541.5 246.2,541.7 248.3,541.8 250.3,541.8 252.4,542.0 253.4,558.5 254.4,556.5 255.5,540.0 256.5,519.3 258.6,527.6 259.6,535.8 260.7,544.1 262.7,547.2 263.8,543.1 265.8,541.4 267.8,541.4 269.9,541.4 271.9,541.3 273.9,541.3 275.9,541.5 278.0,541.4 280.0,541.3 282.0,541.4 284.0,541.3 286.1,541.5 288.1,541.4 290.1,541.3 292.1,541.5 294.2,541.3 296.2,541.3 298.2,541.3 300.2,541.5 302.3,541.3 304.3,541.4 306.3,541.3 308.3,541.4 310.4,541.5 312.4,541.4 314.4,541.4 316.4,541.4 318.5,541.4 320.5,541.4 322.2,542.4 323.6,541.4 325.7,541.4 327.7,541.3 329.8,541.4 331.9,541.3 334.0,541.5 336.0,541.5 338.1,541.3 340.2,541.3 342.3,541.5 344.3,541.4 346.4,541.3 348.5,541.5 350.6,541.5 352.6,541.4 354.7,541.4 356.8,541.4 358.9,541.5 360.9,541.3 363.0,541.3 365.1,541.3 367.2,541.4 369.2,541.4 371.3,541.4 374.4,542.4 377.0,541.6 379.6,541.0 382.1,540.5 384.7,540.0 386.8,539.3 388.9,544.1 390.5,554.4 392.0,558.1 395.1,558.5 396.1,546.2 397.1,519.3 398.2,498.7 399.0,491.4 402.0,491.4 402.3,500.0 402.5,529.6 402.9,537.9 404.8,541.0 406.8,540.9 408.8,541.0 410.9,541.3 412.9,541.2 414.9,541.1 416.9,541.4 418.9,541.2 421.0,541.2 423.0,541.2 425.0,541.4 426.5,544.1 427.5,531.7 428.5,555.4 429.5,546.2 430.6,540.0 431.6,529.6 433.3,535.8 435.3,540.0 437.4,545.1 439.5,542.0 441.5,541.4 443.5,541.3 445.5,541.3 447.5,541.3 449.5,541.5 451.5,541.3 453.5,541.3 455.5,541.4 457.5,541.5 459.6,541.3 461.6,541.5 463.6,541.4 465.6,541.4 467.6,541.4 469.6,541.5 471.6,541.5 473.6,541.4 475.6,541.5 477.6,541.4 479.6,541.4 481.6,541.5 483.6,541.4 485.6,541.5 487.6,541.3 489.6,541.5 491.6,541.4 493.7,541.3 495.7,541.5 497.7,541.4 499.7,541.4 501.7,541.3 503.7,541.3 505.7,541.3 507.7,541.5 509.7,541.3 511.7,541.3 513.7,541.4 515.7,541.4 517.7,541.4 519.7,541.5 521.7,541.3 523.7,541.4 525.8,541.4 527.8,541.3 529.8,541.3 531.8,541.3 533.8,541.5 535.8,541.3 537.8,541.5 539.8,541.3 541.8,541.4 543.8,541.4 545.8,541.4 547.8,541.5 549.8,541.4 551.8,541.4 553.8,541.3 555.8,541.4 557.8,541.3 559.9,541.4 561.9,541.5 563.9,541.5 565.9,541.3 567.9,541.5 569.9,541.5 571.9,541.4 573.9,541.3 575.9,541.5 577.9,541.4 579.9,541.5 581.9,541.5 583.9,541.5 585.9,541.5 587.9,541.3 589.9,541.5 591.9,541.3 594.0,541.3 596.0,541.4 598.0,541.4 600.0,541.3 602.0,541.4 604.0,541.5 606.0,541.4 608.0,541.4 610.0,541.4 612.1,541.5 614.1,541.8 616.2,541.8 618.3,542.0 622.4,545.1 624.0,546.2 624.9,560.6 625.9,569.9 626.9,550.3 628.0,531.7 629.6,540.0 632.7,532.7 635.8,521.4 637.3,513.1 638.3,540.0 639.3,573.0 640.0,585.4 640.6,573.0 642.0,556.5 643.5,540.0 645.1,538.9 648.2,541.0 651.3,541.4 653.3,541.5 655.3,541.4 657.4,541.3 659.4,541.5 661.4,541.3 663.4,541.5 665.5,541.5 667.5,541.5 669.5,541.5 671.5,541.4 673.6,541.4 675.6,541.4 677.6,541.5 679.6,541.3 681.6,541.3 683.7,541.5 685.7,541.5 687.7,541.5 689.7,541.5 691.8,541.4 693.8,541.5 695.8,541.4 697.8,541.5 699.9,541.3 701.9,541.4 703.9,541.4 705.9,541.5 707.9,541.4 710.0,541.5 712.0,541.5 714.0,541.4 716.0,541.3 718.1,541.3 720.1,541.5 722.1,541.4 724.1,541.4 726.2,541.4 728.2,541.3 730.2,541.3 732.2,541.3 734.3,541.3 736.3,541.5 738.3,541.3 740.3,541.3 742.3,541.5 744.4,541.4 746.4,541.3 748.4,541.5 750.4,541.5 752.5,541.4 754.5,541.5 756.5,541.4 758.5,541.3 760.6,541.5 762.6,541.4 764.6,541.5 766.6,541.3 768.6,541.4 770.7,541.5 772.7,541.4 774.7,541.4 776.7,541.4 778.8,541.5 780.8,541.4 782.8,541.4 784.8,541.5 786.9,541.3 788.9,541.3 790.9,541.4 793.0,541.6 795.0,541.6 797.0,542.0 799.1,542.0 801.2,542.3 803.2,542.9 805.3,543.1 808.4,545.1 809.5,540.0 810.5,548.2 811.5,552.3 812.6,558.5 813.6,540.0 814.6,524.5 816.1,531.7 817.7,540.0 819.4,546.2 820.4,529.6 821.9,548.2 823.3,560.6 824.5,544.1 826.4,540.0 829.1,539.3 832.2,541.0 834.2,541.2 836.3,541.4 838.3,541.3 840.4,541.4 842.4,541.5 844.4,541.4 846.4,541.4 848.5,541.4 850.5,541.5 852.5,541.3 854.6,541.5 856.6,541.3 858.6,541.4 860.6,541.3 862.7,541.3 864.7,541.4 866.7,541.5 868.7,541.3 870.8,541.4 872.8,541.4 874.8,541.4 876.9,541.4 878.9,541.4 880.9,541.5 882.9,541.4 885.0,541.4 887.0,541.4" fill="none" stroke="#00ff00" stroke-width="1"/>
<polyline points="147.0,574.4 214.2,574.4 216.9,570.5 219.3,574.0 223.1,577.1 224.5,568.9 225.5,565.8 227.2,571.0 228.6,560.2 229.7,577.1 230.7,598.8 231.7,585.4 232.8,577.1 233.8,574.4 385.8,574.4 388.2,568.9 390.9,574.0 394.0,577.5 396.1,575.1 397.7,566.8 399.2,561.2 400.2,575.1 401.3,581.3 402.3,585.4 403.9,579.2 406.4,574.4 606.9,574.4 609.0,572.0 610.0,568.9 611.0,575.1 612.1,576.1 613.7,568.9 615.2,574.0 616.2,577.1 620.3,577.5 624.5,574.4 789.8,574.4 791.9,570.9 793.3,568.9 794.6,562.3 795.6,570.9 796.7,565.8 798.1,568.9 799.1,577.1 801.2,585.4 803.3,579.2 806.4,574.4 887.0,574.4" fill="none" stroke="#ff00ff" stroke-width="1"/>
<line x1="256.5" y1="96" x2="256.5" y2="607" stroke="#0000ff" stroke-width="1"/>
<line x1="425.5" y1="96" x2="425.5" y2="607" stroke="#0000ff" stroke-width="1"/>
<line x1="256" y1="226.5" x2="426" y2="226.5" stroke="#0000ff" stroke-width="1"/>
<rect x="157" y="604" width="1" height="3" fill="#fff"/>
<rect x="167" y="604" width="1" height="3" fill="#fff"/>
<rect x="177" y="604" width="1" height="3" fill="#fff"/>
<rect x="187" y="604" width="1" height="3" fill="#fff"/>
<rect x="197" y="602" width="2" height="5" fill="#fff"/>
<rect x="207" y="604" width="1" height="3" fill="#fff"/>
<rect x="217" y="604" width="1" height="3" fill="#fff"/>
<rect x="227" y="604" width="1" height="3" fill="#fff"/>
<rect x="237" y="604" width="1" height="3" fill="#fff"/>
<rect x="247" y="602" width="2" height="5" fill="#fff"/>
<rect x="257" y="604" width="1" height="3" fill="#fff"/>
<rect x="267" y="604" width="1" height="3" fill="#fff"/>
<rect x="277" y="604" width="1" height="3" fill="#fff"/>
<rect x="287" y="604" width="1" height="3" fill="#fff"/>
<rect x="297" y="602" width="2" height="5" fill="#fff"/>
<rect x="307" y="604" width="1" height="3" fill="#fff"/>
<rect x="317" y="604" width="1" height="3" fill="#fff"/>
<rect x="327" y="604" width="1" height="3" fill="#fff"/>
<rect x="337" y="604" width="1" height="3" fill="#fff"/>
<rect x="347" y="602" width="2" height="5" fill="#fff"/>
<rect x="357" y="604" width="1" height="3" fill="#fff"/>
<rect x="367" y="604" width="1" height="3" fill="#fff"/>
<rect x="377" y="604" width="1" height="3" fill="#fff"/>
<rect x="387" y="604" width="1" height="3" fill="#fff"/>
<rect x="397" y="602" width="2" height="5" fill="#fff"/>
<rect x="407" y="604" width="1" height="3" fill="#fff"/>
<rect x="417" y="604" width="1" height="3" fill="#fff"/>
<rect x="427" y="604" width="1" height="3" fill="#fff"/>
<rect x="437" y="604" width="1" height="3" fill="#fff"/>
<rect x="447" y="602" width="2" height="5" fill="#fff"/>
<rect x="457" y="604" width="1" height="3" fill="#fff"/>
<rect x="467" y="604" width="1" height="3" fill="#fff"/>
<rect x="477" y="604" width="1" height="3" fill="#fff"/>
<rect x="487" y="604" width="1" height="3" fill="#fff"/>
<rect x="497" y="602" width="2" height="5" fill="#fff"/>
<rect x="507" y="604" width="1" height="3" fill="#fff"/>
<rect x="517" y="604" width="1" height="3" fill="#fff"/>
<rect x="527" y="604" width="1" height="3" fill="#fff"/>
<rect x="537" y="604" width="1" height="3" fill="#fff"/>
<rect x="547" y="602" width="2" height="5" fill="#fff"/>
<rect x="557" y="604" width="1" height="3" fill="#fff"/>
<rect x="567" y="604" width="1" height="3" fill="#fff"/>
<rect x="577" y="604" width="1" height="3" fill="#fff"/>
<rect x="587" y="604" width="1" height="3" fill="#fff"/>
<rect x="597" y="602" width="2" height="5" fill="#fff"/>
<rect x="607" y="604" width="1" height="3" fill="#fff"/>
<rect x="617" y="604" width="1" height="3" fill="#fff"/>
<rect x="627" y="604" width="1" height="3" fill="#fff"/>
<rect x="637" y="604" width="1" height="3" fill="#fff"/>
<rect x="646" y="598" width="3" height="9" fill="#fff"/>
<rect x="657" y="604" width="1" height="3" fill="#fff"/>
<rect x="667" y="604" width="1" height="3" fill="#fff"/>
<rect x="677" y="604" width="1" height="3" fill="#fff"/>
<rect x="687" y="604" width="1" height="3" fill="#fff"/>
<rect x="697" y="602" width="2" height="5" fill="#fff"/>
<rect x="707" y="604" width="1" height="3" fill="#fff"/>
<rect x="717" y="604" width="1" height="3" fill="#fff"/>
<rect x="727" y="604" width="1" height="3" fill="#fff"/>
<rect x="737" y="604" width="1" height="3" fill="#fff"/>
<rect x="747" y="602" width="2" height="5" fill="#fff"/>
<rect x="757" y="604" width="1" height="3" fill="#fff"/>
<rect x="767" y="604" width="1" height="3" fill="#fff"/>
<rect x="777" y="604" width="1" height="3" fill="#fff"/>
<rect x="787" y="604" width="1" height="3" fill="#fff"/>
<rect x="797" y="602" width="2" height="5" fill="#fff"/>
<rect x="807" y="604" width="1" height="3" fill="#fff"/>
<rect x="817" y="604" width="1" height="3" fill="#fff"/>
<rect x="827" y="604" width="1" height="3" fill="#fff"/>
<rect x="837" y="604" width="1" height="3" fill="#fff"/>
<rect x="847" y="602" width="2" height="5" fill="#fff"/>
<rect x="857" y="604" width="1" height="3" fill="#fff"/>
<rect x="867" y="604" width="1" height="3" fill="#fff"/>
<rect x="877" y="604" width="1" height="3" fill="#fff"/>
</g></svg>
<div class="a " style="left:332px;top:218px;width:21px;height:16px;background:#808080"></div>
<div class="t" style="left:332.1px;transform-origin:0 0;top:218px;font-size:14px;font-weight:bold;-webkit-text-stroke:0.25px;color:#fff;transform:scaleX(0.882);">338</div>
<div class="a " style="left:891px;top:94px;width:1px;height:514px;background:#808080"></div>
<div class="a " style="left:908px;top:94px;width:1px;height:515px;background:#fff"></div>
<div class="a " style="left:911px;top:94px;width:1px;height:515px;background:#808080"></div>
<div class="a dither" style="left:892px;top:94px;width:16px;height:514px;"></div>
<div class="a raised2" style="left:892px;top:94px;width:16px;height:16px;"></div>
<svg class="a" style="left:0;top:0" width="1" height="1"><polygon points="896.5,104 903.5,104 900,100" fill="#000"/></svg>
<div class="a raised2" style="left:892px;top:148px;width:16px;height:16px;"></div>
<div class="a raised2" style="left:892px;top:592px;width:16px;height:16px;"></div>
<svg class="a" style="left:0;top:0" width="1" height="1"><polygon points="896.5,598 903.5,598 900,602" fill="#000"/></svg>
<div class="a sunken" style="left:8px;top:610px;width:136px;height:22px;background:#fff"></div>
<div class="a raised2" style="left:126px;top:612px;width:16px;height:18px;"></div>
<svg class="a" style="left:0;top:0" width="1" height="1"><polygon points="130.5,619 137.5,619 134,623" fill="#000"/></svg>
<div class="t" style="left:12.0px;transform-origin:0 0;top:613px;font-size:13px;-webkit-text-stroke:0.15px;transform:scaleX(0.912);">V1</div>
<div class="t" style="left:8.5px;transform-origin:0 0;top:633px;font-size:14px;font-weight:bold;-webkit-text-stroke:0.25px;transform:scaleX(0.951);">II</div>
<div class="t" style="left:72.5px;transform-origin:0 0;top:633px;font-size:14px;font-weight:bold;-webkit-text-stroke:0.25px;transform:scaleX(0.949);">Gain =</div>
<div class="t" style="left:123.5px;transform-origin:0 0;top:633px;font-size:14px;font-weight:bold;-webkit-text-stroke:0.25px;transform:scaleX(0.899);">45</div>
<div class="a dither" style="left:8px;top:649px;width:113px;height:16px;"></div>
<div class="a raised2" style="left:8px;top:649px;width:16px;height:16px;"></div>
<svg class="a" style="left:0;top:0" width="1" height="1"><polygon points="17,653.5 17,660.5 13,657" fill="#000"/></svg>
<div class="a raised2" style="left:43px;top:649px;width:16px;height:16px;"></div>
<div class="a raised2" style="left:105px;top:649px;width:16px;height:16px;"></div>
<svg class="a" style="left:0;top:0" width="1" height="1"><polygon points="111,653.5 111,660.5 115,657" fill="#000"/></svg>
<div class="t" style="left:123.5px;transform-origin:0 0;top:649px;font-size:14px;font-weight:bold;-webkit-text-stroke:0.25px;transform:scaleX(0.898);">4</div>
<div class="a dither" style="left:8px;top:669px;width:113px;height:16px;"></div>
<div class="a raised2" style="left:8px;top:669px;width:16px;height:16px;"></div>
<svg class="a" style="left:0;top:0" width="1" height="1"><polygon points="17,673.5 17,680.5 13,677" fill="#000"/></svg>
<div class="a raised2" style="left:48px;top:669px;width:16px;height:16px;"></div>
<div class="a raised2" style="left:105px;top:669px;width:16px;height:16px;"></div>
<svg class="a" style="left:0;top:0" width="1" height="1"><polygon points="111,673.5 111,680.5 115,677" fill="#000"/></svg>
<div class="t" style="left:123.5px;transform-origin:0 0;top:669px;font-size:14px;font-weight:bold;-webkit-text-stroke:0.25px;transform:scaleX(0.899);">80</div>
<div class="a " style="left:145px;top:609px;width:767px;height:60px;box-shadow:inset 2px 2px 0 #808080,inset -2px -2px 0 #fff;"></div>
<div class="a " style="left:147px;top:611px;width:763px;height:56px;background:#000"></div>
<svg class="a" style="left:0;top:0" width="920" height="712" viewBox="0 0 920 712"><g shape-rendering="crispEdges">
<rect x="436.5" y="614.5" width="250" height="49" fill="none" stroke="#fff" stroke-width="1"/>
<polyline points="147.0,640.5 149.2,639.5 150.3,629.0 151.9,611.0" fill="none" stroke="#fff" stroke-width="1"/>
<polyline points="169.0,611.0 171.1,641.6 174.3,667.0" fill="none" stroke="#fff" stroke-width="1"/>
<polyline points="191.6,667.0 193.7,649.9 196.2,639.5 199.3,634.9 202.4,634.3 205.6,637.4 208.7,641.6 210.4,633.2 211.8,614.4 212.4,611.0" fill="none" stroke="#fff" stroke-width="1"/>
<polyline points="229.1,611.0 231.6,641.6 234.2,667.0" fill="none" stroke="#fff" stroke-width="1"/>
<polyline points="252.1,667.0 254.2,652.0 256.7,641.6 259.8,636.3 262.9,636.3 266.1,641.6 268.2,644.7 270.3,633.2 271.7,611.0" fill="none" stroke="#fff" stroke-width="1"/>
<polyline points="288.4,611.0 290.5,641.6 293.0,667.0" fill="none" stroke="#fff" stroke-width="1"/>
<polyline points="310.9,667.0 313.0,652.0 315.5,641.6 319.3,637.4 323.5,637.8 326.6,641.6 328.7,645.3 330.8,635.3 331.7,624.9 332.5,611.0" fill="none" stroke="#fff" stroke-width="1"/>
<polyline points="349.2,611.0 351.3,641.6 353.6,667.0" fill="none" stroke="#fff" stroke-width="1"/>
<polyline points="372.4,667.0 374.4,652.0 377.0,640.5 380.1,636.3 383.2,637.4 385.9,642.6 387.8,644.7 389.5,633.2 391.1,611.0" fill="none" stroke="#fff" stroke-width="1"/>
<polyline points="407.6,611.0 409.9,641.6 412.6,667.0" fill="none" stroke="#fff" stroke-width="1"/>
<polyline points="430.6,667.0 432.7,652.0 435.0,641.6 437.5,637.8 442.7,637.4 447.9,638.0 450.6,641.1 452.5,642.6 454.2,633.2 455.8,611.0" fill="none" stroke="#fff" stroke-width="1"/>
<polyline points="472.9,611.0 475.0,641.6 477.5,667.0" fill="none" stroke="#fff" stroke-width="1"/>
<polyline points="496.5,667.0 498.6,652.0 501.1,642.6 504.2,639.1 507.0,641.6 509.0,645.3 510.7,635.3 512.2,611.0" fill="none" stroke="#fff" stroke-width="1"/>
<polyline points="528.5,611.0 530.6,641.6 533.7,667.0" fill="none" stroke="#fff" stroke-width="1"/>
<polyline points="551.5,667.0 553.1,652.0 555.6,641.6 558.8,638.4 566.1,637.0 572.3,634.3 578.6,633.6 583.8,634.9 586.9,630.1 588.6,626.5 589.5,635.3 590.5,652.0 591.8,667.0" fill="none" stroke="#fff" stroke-width="1"/>
<polyline points="600.1,667.0 600.9,641.6 602.6,624.9 605.7,617.6 608.9,614.4 611.6,611.0" fill="none" stroke="#fff" stroke-width="1"/>
<polyline points="627.6,611.0 629.7,622.8 632.9,632.2 637.0,635.7 641.2,636.3 645.4,634.3 647.5,632.2 648.7,639.5 650.0,652.0 651.6,667.0" fill="none" stroke="#fff" stroke-width="1"/>
<polyline points="659.6,667.0 660.6,641.6 662.7,623.8 665.2,620.7 669.4,617.6 672.9,611.0" fill="none" stroke="#fff" stroke-width="1"/>
<polyline points="686.1,611.0 688.2,622.8 691.3,632.2 695.5,635.3 699.6,636.3 707.2,635.7 709.9,633.6 711.4,635.3 712.4,645.7 713.9,667.0" fill="none" stroke="#fff" stroke-width="1"/>
<polyline points="722.2,667.0 723.3,645.7 725.0,624.9 728.1,622.4 732.3,617.6 735.4,611.0" fill="none" stroke="#fff" stroke-width="1"/>
<polyline points="748.3,611.0 751.0,622.8 754.2,633.2 757.3,637.8 762.5,638.4 767.7,637.4 770.4,635.7 771.9,638.4 773.4,649.9 775.0,667.0" fill="none" stroke="#fff" stroke-width="1"/>
<polyline points="783.4,667.0 784.4,645.7 786.1,626.5 789.6,623.8 793.8,619.0 797.6,611.0" fill="none" stroke="#fff" stroke-width="1"/>
<polyline points="809.5,611.0 812.2,624.9 815.7,634.9 819.9,637.8 827.2,638.8 831.4,638.4 833.5,637.0 834.7,641.6 836.0,654.1 837.2,667.0" fill="none" stroke="#fff" stroke-width="1"/>
<polyline points="845.6,667.0 846.6,645.7 848.1,627.0 852.3,624.5 856.4,619.7 859.6,611.0" fill="none" stroke="#fff" stroke-width="1"/>
<polyline points="871.0,611.0 873.5,624.9 877.3,636.3 880.4,639.1 887.7,639.5 894.2,639.4 896.0,638.5 897.0,645.0 897.9,667.0" fill="none" stroke="#fff" stroke-width="1"/>
<polyline points="907.2,667.0 908.1,650.5 910.0,633.8 911.0,628.0" fill="none" stroke="#fff" stroke-width="1"/>
</g></svg>
<div class="a dither" style="left:145px;top:669px;width:767px;height:16px;"></div>
<div class="a raised2" style="left:145px;top:669px;width:16px;height:16px;"></div>
<svg class="a" style="left:0;top:0" width="1" height="1"><polygon points="154,673.5 154,680.5 150,677" fill="#000"/></svg>
<div class="a raised2" style="left:560px;top:669px;width:16px;height:16px;"></div>
<div class="a raised2" style="left:896px;top:669px;width:16px;height:16px;"></div>
<svg class="a" style="left:0;top:0" width="1" height="1"><polygon points="902,673.5 902,680.5 906,677" fill="#000"/></svg>
<div class="a sunk1" style="left:4px;top:691px;width:912px;height:17px;"></div>
<svg class="a" style="left:902px;top:694px" width="13" height="13"><path d="M12 1L1 12M12 5L5 12M12 9L9 12" stroke="#fff" stroke-width="1"/><path d="M12 2L2 12M12 3L3 12M12 6L6 12M12 7L7 12M12 10L10 12M12 11L11 12" stroke="#808080" stroke-width="1"/></svg>
</body></html>
